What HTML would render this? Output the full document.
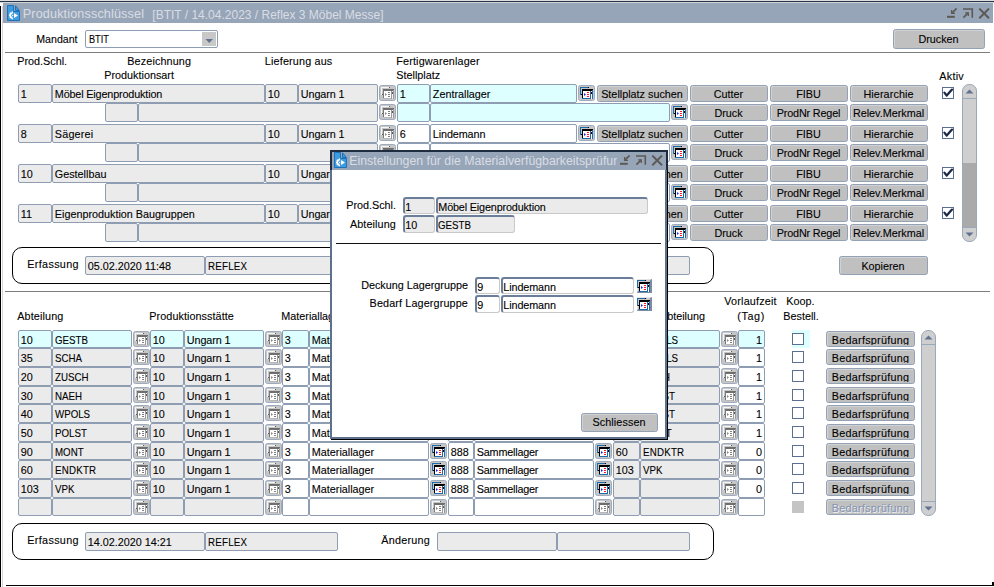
<!DOCTYPE html>
<html><head><meta charset="utf-8"><title>Produktionsschlüssel</title>
<style>
html,body{margin:0;padding:0;background:#ffffff;}
body{width:994px;height:587px;position:relative;overflow:hidden;font-family:"Liberation Sans",sans-serif;}
div{position:absolute;}
.t{white-space:nowrap;line-height:1;-webkit-text-stroke:0.1px currentColor;}
</style></head><body>
<div style="left:0;top:0;width:994px;height:1px;background:#dedede"></div>
<div style="left:0px;top:1px;width:994px;height:1px;background:#25344a"></div>
<div style="left:0px;top:2px;width:994px;height:1px;background:#d3d4d6"></div>
<div style="left:0px;top:6px;width:1px;height:581px;background:#000"></div>
<div style="left:2px;top:6px;width:1px;height:581px;background:#d6d6d6"></div>
<div style="left:3px;top:3px;width:990px;height:20px;background:#97a5b9"></div>
<svg style="position:absolute;left:7px;top:5px" width="14" height="17" viewBox="0 0 14 17"><path d="M0.5 0.5H6.5V6.5H12.5V15.5H0.5Z" fill="#3d9be0" stroke="#1e72b8" stroke-width="1"/><path d="M8.5 0.8L12.5 5.5H8.5Z" fill="#3d9be0" stroke="#1e72b8" stroke-width="1"/><path d="M5.5 8.1A2.3 2.3 0 0 0 5.5 12.7" stroke="#fff" stroke-width="1.7" fill="none"/><path d="M2 10.4H3.4M2.9 7.8L3.9 8.8M2.9 13L3.9 12M5.4 6.6V7.9M5.4 12.9V14.2" stroke="#fff" stroke-width="1.3"/><circle cx="5.6" cy="10.4" r="0.75" fill="#fff"/><path d="M7 8L11 10.5L7 13Z" fill="#fff"/></svg>
<div class="t" style="left:22.8px;top:8.33px;font-size:12.6px;color:#d9dde3;transform-origin:0 0;-webkit-text-stroke:0;letter-spacing:0.15px;">Produktionsschlüssel</div>
<div class="t" style="left:152.3px;top:8.84px;font-size:12px;color:#d9dde3;transform-origin:0 0;-webkit-text-stroke:0;">[BTIT / 14.04.2023 / Reflex 3 Möbel Messe]</div>
<svg style="position:absolute;left:947px;top:8px" width="46" height="12" viewBox="0 0 46 12"><path d="M0 8.8H7.8" stroke="#5d5954" stroke-width="2"/><path d="M9.6 0.4L4.9 5.1" stroke="#5d5954" stroke-width="1.7"/><path d="M4.6 2V5.4H7.9" fill="none" stroke="#5d5954" stroke-width="1.3"/><path d="M16 1H25.3V9.8" fill="none" stroke="#5d5954" stroke-width="1.6"/><path d="M16.4 9.6L21.2 4.8" stroke="#5d5954" stroke-width="1.7"/><path d="M18.2 4.8H21.3V7.9" fill="none" stroke="#5d5954" stroke-width="1.3"/><path d="M32.3 0.6L42 10.2M42 0.6L32.3 10.2" stroke="#5d5954" stroke-width="2"/></svg>
<div style="left:6px;top:585px;width:987px;height:1px;background:#000000"></div>
<div style="left:992px;top:582px;width:2px;height:4px;background:#000"></div>
<div class="t" style="left:36.3px;top:34.03px;font-size:10.6px;color:#000000;transform-origin:0 0;">Mandant</div>
<div style="left:85px;top:30px;width:133px;height:18px;background:#fff;border:1px solid #8f9db3;border-radius:2px;box-sizing:border-box"></div>
<div class="t" style="left:89.3px;top:34.87px;font-size:10.2px;color:#000000;transform:scaleX(0.9);transform-origin:0 0;">BTIT</div>
<div style="left:202px;top:32px;width:14px;height:14px;background:#c8c8c8"></div>
<svg style="position:absolute;left:202px;top:32px" width="14" height="14" viewBox="0 0 14 14"><path d="M3.5 7H11L7.25 11Z" fill="#5f7391"/></svg>
<div style="left:893px;top:29px;width:92px;height:20px;background:#c0c0c0;border:1px solid #93a1b6;border-radius:2.5px;box-sizing:border-box;box-shadow:inset 1px 1px 0 #d2d2d2"></div>
<div class="t" style="left:892.5px;width:92px;text-align:center;top:33.86px;font-size:10.8px;color:#000000;">Drucken</div>
<div style="left:5px;top:52px;width:985px;height:1px;background:#7d7d7d"></div>
<div class="t" style="left:17.3px;top:55.86px;font-size:10.8px;color:#000000;transform-origin:0 0;">Prod.Schl.</div>
<div class="t" style="left:127.3px;top:55.86px;font-size:10.8px;color:#000000;letter-spacing:0.12px;transform-origin:0 0;">Bezeichnung</div>
<div class="t" style="left:104.3px;top:69.86px;font-size:10.8px;color:#000000;transform-origin:0 0;">Produktionsart</div>
<div class="t" style="left:264.8px;top:55.86px;font-size:10.8px;color:#000000;letter-spacing:0.17px;transform-origin:0 0;">Lieferung aus</div>
<div class="t" style="left:396.3px;top:55.86px;font-size:10.8px;color:#000000;letter-spacing:0.15px;transform-origin:0 0;">Fertigwarenlager</div>
<div class="t" style="left:396.3px;top:69.86px;font-size:10.8px;color:#000000;transform-origin:0 0;">Stellplatz</div>
<div class="t" style="left:939.3px;top:70.86px;font-size:10.8px;color:#000000;letter-spacing:0.25px;transform-origin:0 0;">Aktiv</div>
<div style="left:18px;top:84px;width:34px;height:19px;background:#ebebeb;border:1px solid #8f9db3;border-radius:2px;box-sizing:border-box"></div>
<div class="t" style="left:20.8px;top:88.86px;font-size:10.8px;color:#000000;transform-origin:0 0;">1</div>
<div style="left:52px;top:84px;width:213px;height:19px;background:#ebebeb;border:1px solid #8f9db3;border-radius:2px;box-sizing:border-box"></div>
<div class="t" style="left:54.8px;top:88.86px;font-size:10.8px;color:#000000;letter-spacing:-0.15px;transform-origin:0 0;">Möbel Eigenproduktion</div>
<div style="left:265px;top:84px;width:33px;height:19px;background:#ebebeb;border:1px solid #8f9db3;border-radius:2px;box-sizing:border-box"></div>
<div class="t" style="left:267.8px;top:88.86px;font-size:10.8px;color:#000000;transform-origin:0 0;">10</div>
<div style="left:298px;top:84px;width:80px;height:19px;background:#ebebeb;border:1px solid #8f9db3;border-radius:2px;box-sizing:border-box"></div>
<div class="t" style="left:300.8px;top:88.86px;font-size:10.8px;color:#000000;letter-spacing:-0.1px;transform-origin:0 0;">Ungarn 1</div>
<div style="left:379px;top:85px;width:17px;height:16px;background:#c6c6c6;border:1px solid #9eabbf;border-radius:2.5px;box-sizing:border-box"></div>
<svg style="position:absolute;left:379px;top:85px" width="17" height="16" viewBox="0 0 17 16" shape-rendering="crispEdges">
<path d="M2.5 9.5V2.5H10" fill="none" stroke="#f6f6f6" stroke-width="1"/><rect x="10" y="2" width="1" height="1" fill="#5a5a5a"/><rect x="3" y="9" width="1" height="1" fill="#5a5a5a"/><rect x="5" y="5.5" width="7" height="7.5" fill="#ffffff"/><rect x="4" y="4" width="11" height="1.6" fill="#6e6e6e"/><rect x="4" y="5" width="1" height="9" fill="#7a7a7a"/><rect x="4" y="13" width="11" height="1" fill="#b8b8b8"/><rect x="12" y="5.5" width="1" height="8" fill="#9a9a9a"/><rect x="13" y="5.5" width="1" height="8" fill="#f2f2f2"/><rect x="14" y="5" width="1" height="8.5" fill="#9a9a9a"/><rect x="13" y="7" width="1" height="2" fill="#5a5a5a"/><path d="M6 7.9L8 9.4L6 10.9Z" fill="#8a8a8a" shape-rendering="auto"/><rect x="9" y="7" width="2" height="1" fill="#7e7e7e"/><rect x="9" y="9" width="2" height="1" fill="#7e7e7e"/><rect x="9" y="11" width="2" height="1" fill="#7e7e7e"/></svg>
<div style="left:397px;top:84px;width:33px;height:19px;background:#ddffff;border:1px solid #8f9db3;border-radius:2px;box-sizing:border-box"></div>
<div class="t" style="left:399.8px;top:88.86px;font-size:10.8px;color:#000000;transform-origin:0 0;">1</div>
<div style="left:430px;top:84px;width:147px;height:19px;background:#ddffff;border:1px solid #8f9db3;border-radius:2px;box-sizing:border-box"></div>
<div class="t" style="left:432.8px;top:88.86px;font-size:10.8px;color:#000000;transform-origin:0 0;">Zentrallager</div>
<div style="left:578px;top:85px;width:17px;height:16px;background:#c6c6c6;border:1px solid #9eabbf;border-radius:2.5px;box-sizing:border-box"></div>
<svg style="position:absolute;left:578px;top:85px" width="17" height="16" viewBox="0 0 17 16" shape-rendering="crispEdges">
<path d="M2.5 9.5V2.5H10" fill="none" stroke="#1f6aa8" stroke-width="1"/><rect x="10" y="2" width="1" height="1" fill="#000"/><rect x="3" y="9" width="1" height="1" fill="#000"/><rect x="5" y="5.5" width="7" height="7.5" fill="#ffffff"/><rect x="4" y="4" width="11" height="1.6" fill="#000000"/><rect x="4" y="5" width="1" height="9" fill="#000"/><rect x="4" y="13" width="11" height="1" fill="#1f6aa8"/><rect x="12" y="5.5" width="1" height="8" fill="#1f6aa8"/><rect x="13" y="5.5" width="1" height="8" fill="#ffffff"/><rect x="14" y="5" width="1" height="8.5" fill="#1f6aa8"/><rect x="13" y="7" width="1" height="2" fill="#000"/><path d="M6 7.9L8 9.4L6 10.9Z" fill="#1a2cff" shape-rendering="auto"/><rect x="9" y="7" width="2" height="1" fill="#ff1a1a"/><rect x="9" y="9" width="2" height="1" fill="#ff1a1a"/><rect x="9" y="11" width="2" height="1" fill="#ff1a1a"/></svg>
<div style="left:597px;top:85px;width:91px;height:17px;background:#c0c0c0;border:1px solid #93a1b6;border-radius:2.5px;box-sizing:border-box;box-shadow:inset 1px 1px 0 #d2d2d2"></div>
<div class="t" style="left:596.5px;width:91px;text-align:center;top:88.86px;font-size:10.8px;color:#000000;">Stellplatz suchen</div>
<div style="left:690px;top:85px;width:78px;height:17px;background:#c0c0c0;border:1px solid #93a1b6;border-radius:2.5px;box-sizing:border-box;box-shadow:inset 1px 1px 0 #d2d2d2"></div>
<div class="t" style="left:689.5px;width:78px;text-align:center;top:88.86px;font-size:10.8px;color:#000000;">Cutter</div>
<div style="left:770px;top:85px;width:78px;height:17px;background:#c0c0c0;border:1px solid #93a1b6;border-radius:2.5px;box-sizing:border-box;box-shadow:inset 1px 1px 0 #d2d2d2"></div>
<div class="t" style="left:769.5px;width:78px;text-align:center;top:88.86px;font-size:10.8px;color:#000000;">FIBU</div>
<div style="left:850px;top:85px;width:78px;height:17px;background:#c0c0c0;border:1px solid #93a1b6;border-radius:2.5px;box-sizing:border-box;box-shadow:inset 1px 1px 0 #d2d2d2"></div>
<div class="t" style="left:849.5px;width:78px;text-align:center;top:88.86px;font-size:10.8px;color:#000000;letter-spacing:0.1px;">Hierarchie</div>
<div style="left:942px;top:87px;width:12px;height:12px;background:#ffffff;border:1px solid #5b6f8e;box-sizing:border-box"></div>
<svg style="position:absolute;left:942px;top:87px" width="12" height="12" viewBox="0 0 12 12"><path d="M2.4 5.6L4.7 8.6L10 2.6" fill="none" stroke="#1c2a48" stroke-width="2.3" stroke-linecap="round" stroke-linejoin="round"/></svg>
<div style="left:105px;top:103px;width:33px;height:19px;background:#ebebeb;border:1px solid #8f9db3;border-radius:2px;box-sizing:border-box"></div>
<div style="left:138px;top:103px;width:240px;height:19px;background:#ebebeb;border:1px solid #8f9db3;border-radius:2px;box-sizing:border-box"></div>
<div style="left:379px;top:104px;width:17px;height:16px;background:#c6c6c6;border:1px solid #9eabbf;border-radius:2.5px;box-sizing:border-box"></div>
<svg style="position:absolute;left:379px;top:104px" width="17" height="16" viewBox="0 0 17 16" shape-rendering="crispEdges">
<path d="M2.5 9.5V2.5H10" fill="none" stroke="#f6f6f6" stroke-width="1"/><rect x="10" y="2" width="1" height="1" fill="#5a5a5a"/><rect x="3" y="9" width="1" height="1" fill="#5a5a5a"/><rect x="5" y="5.5" width="7" height="7.5" fill="#ffffff"/><rect x="4" y="4" width="11" height="1.6" fill="#6e6e6e"/><rect x="4" y="5" width="1" height="9" fill="#7a7a7a"/><rect x="4" y="13" width="11" height="1" fill="#b8b8b8"/><rect x="12" y="5.5" width="1" height="8" fill="#9a9a9a"/><rect x="13" y="5.5" width="1" height="8" fill="#f2f2f2"/><rect x="14" y="5" width="1" height="8.5" fill="#9a9a9a"/><rect x="13" y="7" width="1" height="2" fill="#5a5a5a"/><path d="M6 7.9L8 9.4L6 10.9Z" fill="#8a8a8a" shape-rendering="auto"/><rect x="9" y="7" width="2" height="1" fill="#7e7e7e"/><rect x="9" y="9" width="2" height="1" fill="#7e7e7e"/><rect x="9" y="11" width="2" height="1" fill="#7e7e7e"/></svg>
<div style="left:397px;top:103px;width:33px;height:19px;background:#ddffff;border:1px solid #8f9db3;border-radius:2px;box-sizing:border-box"></div>
<div style="left:430px;top:103px;width:240px;height:19px;background:#ddffff;border:1px solid #8f9db3;border-radius:2px;box-sizing:border-box"></div>
<div style="left:671px;top:104px;width:17px;height:16px;background:#c6c6c6;border:1px solid #9eabbf;border-radius:2.5px;box-sizing:border-box"></div>
<svg style="position:absolute;left:671px;top:104px" width="17" height="16" viewBox="0 0 17 16" shape-rendering="crispEdges">
<path d="M2.5 9.5V2.5H10" fill="none" stroke="#1f6aa8" stroke-width="1"/><rect x="10" y="2" width="1" height="1" fill="#000"/><rect x="3" y="9" width="1" height="1" fill="#000"/><rect x="5" y="5.5" width="7" height="7.5" fill="#ffffff"/><rect x="4" y="4" width="11" height="1.6" fill="#000000"/><rect x="4" y="5" width="1" height="9" fill="#000"/><rect x="4" y="13" width="11" height="1" fill="#1f6aa8"/><rect x="12" y="5.5" width="1" height="8" fill="#1f6aa8"/><rect x="13" y="5.5" width="1" height="8" fill="#ffffff"/><rect x="14" y="5" width="1" height="8.5" fill="#1f6aa8"/><rect x="13" y="7" width="1" height="2" fill="#000"/><path d="M6 7.9L8 9.4L6 10.9Z" fill="#1a2cff" shape-rendering="auto"/><rect x="9" y="7" width="2" height="1" fill="#ff1a1a"/><rect x="9" y="9" width="2" height="1" fill="#ff1a1a"/><rect x="9" y="11" width="2" height="1" fill="#ff1a1a"/></svg>
<div style="left:690px;top:104px;width:78px;height:17px;background:#c0c0c0;border:1px solid #93a1b6;border-radius:2.5px;box-sizing:border-box;box-shadow:inset 1px 1px 0 #d2d2d2"></div>
<div class="t" style="left:689.5px;width:78px;text-align:center;top:107.86px;font-size:10.8px;color:#000000;">Druck</div>
<div style="left:770px;top:104px;width:78px;height:17px;background:#c0c0c0;border:1px solid #93a1b6;border-radius:2.5px;box-sizing:border-box;box-shadow:inset 1px 1px 0 #d2d2d2"></div>
<div class="t" style="left:769.5px;width:78px;text-align:center;top:107.86px;font-size:10.8px;color:#000000;letter-spacing:-0.15px;">ProdNr Regel</div>
<div style="left:850px;top:104px;width:78px;height:17px;background:#c0c0c0;border:1px solid #93a1b6;border-radius:2.5px;box-sizing:border-box;box-shadow:inset 1px 1px 0 #d2d2d2"></div>
<div class="t" style="left:849.5px;width:78px;text-align:center;top:107.86px;font-size:10.8px;color:#000000;">Relev.Merkmal</div>
<div style="left:18px;top:124px;width:34px;height:19px;background:#ebebeb;border:1px solid #8f9db3;border-radius:2px;box-sizing:border-box"></div>
<div class="t" style="left:20.8px;top:128.86px;font-size:10.8px;color:#000000;transform-origin:0 0;">8</div>
<div style="left:52px;top:124px;width:213px;height:19px;background:#ebebeb;border:1px solid #8f9db3;border-radius:2px;box-sizing:border-box"></div>
<div class="t" style="left:54.8px;top:128.86px;font-size:10.8px;color:#000000;letter-spacing:0.2px;transform-origin:0 0;">Sägerei</div>
<div style="left:265px;top:124px;width:33px;height:19px;background:#ebebeb;border:1px solid #8f9db3;border-radius:2px;box-sizing:border-box"></div>
<div class="t" style="left:267.8px;top:128.86px;font-size:10.8px;color:#000000;transform-origin:0 0;">10</div>
<div style="left:298px;top:124px;width:80px;height:19px;background:#ebebeb;border:1px solid #8f9db3;border-radius:2px;box-sizing:border-box"></div>
<div class="t" style="left:300.8px;top:128.86px;font-size:10.8px;color:#000000;letter-spacing:-0.1px;transform-origin:0 0;">Ungarn 1</div>
<div style="left:379px;top:125px;width:17px;height:16px;background:#c6c6c6;border:1px solid #9eabbf;border-radius:2.5px;box-sizing:border-box"></div>
<svg style="position:absolute;left:379px;top:125px" width="17" height="16" viewBox="0 0 17 16" shape-rendering="crispEdges">
<path d="M2.5 9.5V2.5H10" fill="none" stroke="#f6f6f6" stroke-width="1"/><rect x="10" y="2" width="1" height="1" fill="#5a5a5a"/><rect x="3" y="9" width="1" height="1" fill="#5a5a5a"/><rect x="5" y="5.5" width="7" height="7.5" fill="#ffffff"/><rect x="4" y="4" width="11" height="1.6" fill="#6e6e6e"/><rect x="4" y="5" width="1" height="9" fill="#7a7a7a"/><rect x="4" y="13" width="11" height="1" fill="#b8b8b8"/><rect x="12" y="5.5" width="1" height="8" fill="#9a9a9a"/><rect x="13" y="5.5" width="1" height="8" fill="#f2f2f2"/><rect x="14" y="5" width="1" height="8.5" fill="#9a9a9a"/><rect x="13" y="7" width="1" height="2" fill="#5a5a5a"/><path d="M6 7.9L8 9.4L6 10.9Z" fill="#8a8a8a" shape-rendering="auto"/><rect x="9" y="7" width="2" height="1" fill="#7e7e7e"/><rect x="9" y="9" width="2" height="1" fill="#7e7e7e"/><rect x="9" y="11" width="2" height="1" fill="#7e7e7e"/></svg>
<div style="left:397px;top:124px;width:33px;height:19px;background:#ffffff;border:1px solid #8f9db3;border-radius:2px;box-sizing:border-box"></div>
<div class="t" style="left:399.8px;top:128.86px;font-size:10.8px;color:#000000;transform-origin:0 0;">6</div>
<div style="left:430px;top:124px;width:147px;height:19px;background:#ffffff;border:1px solid #8f9db3;border-radius:2px;box-sizing:border-box"></div>
<div class="t" style="left:432.8px;top:128.86px;font-size:10.8px;color:#000000;letter-spacing:-0.1px;transform-origin:0 0;">Lindemann</div>
<div style="left:578px;top:125px;width:17px;height:16px;background:#c6c6c6;border:1px solid #9eabbf;border-radius:2.5px;box-sizing:border-box"></div>
<svg style="position:absolute;left:578px;top:125px" width="17" height="16" viewBox="0 0 17 16" shape-rendering="crispEdges">
<path d="M2.5 9.5V2.5H10" fill="none" stroke="#1f6aa8" stroke-width="1"/><rect x="10" y="2" width="1" height="1" fill="#000"/><rect x="3" y="9" width="1" height="1" fill="#000"/><rect x="5" y="5.5" width="7" height="7.5" fill="#ffffff"/><rect x="4" y="4" width="11" height="1.6" fill="#000000"/><rect x="4" y="5" width="1" height="9" fill="#000"/><rect x="4" y="13" width="11" height="1" fill="#1f6aa8"/><rect x="12" y="5.5" width="1" height="8" fill="#1f6aa8"/><rect x="13" y="5.5" width="1" height="8" fill="#ffffff"/><rect x="14" y="5" width="1" height="8.5" fill="#1f6aa8"/><rect x="13" y="7" width="1" height="2" fill="#000"/><path d="M6 7.9L8 9.4L6 10.9Z" fill="#1a2cff" shape-rendering="auto"/><rect x="9" y="7" width="2" height="1" fill="#ff1a1a"/><rect x="9" y="9" width="2" height="1" fill="#ff1a1a"/><rect x="9" y="11" width="2" height="1" fill="#ff1a1a"/></svg>
<div style="left:597px;top:125px;width:91px;height:17px;background:#c0c0c0;border:1px solid #93a1b6;border-radius:2.5px;box-sizing:border-box;box-shadow:inset 1px 1px 0 #d2d2d2"></div>
<div class="t" style="left:596.5px;width:91px;text-align:center;top:128.86px;font-size:10.8px;color:#000000;">Stellplatz suchen</div>
<div style="left:690px;top:125px;width:78px;height:17px;background:#c0c0c0;border:1px solid #93a1b6;border-radius:2.5px;box-sizing:border-box;box-shadow:inset 1px 1px 0 #d2d2d2"></div>
<div class="t" style="left:689.5px;width:78px;text-align:center;top:128.86px;font-size:10.8px;color:#000000;">Cutter</div>
<div style="left:770px;top:125px;width:78px;height:17px;background:#c0c0c0;border:1px solid #93a1b6;border-radius:2.5px;box-sizing:border-box;box-shadow:inset 1px 1px 0 #d2d2d2"></div>
<div class="t" style="left:769.5px;width:78px;text-align:center;top:128.86px;font-size:10.8px;color:#000000;">FIBU</div>
<div style="left:850px;top:125px;width:78px;height:17px;background:#c0c0c0;border:1px solid #93a1b6;border-radius:2.5px;box-sizing:border-box;box-shadow:inset 1px 1px 0 #d2d2d2"></div>
<div class="t" style="left:849.5px;width:78px;text-align:center;top:128.86px;font-size:10.8px;color:#000000;letter-spacing:0.1px;">Hierarchie</div>
<div style="left:942px;top:127px;width:12px;height:12px;background:#ffffff;border:1px solid #5b6f8e;box-sizing:border-box"></div>
<svg style="position:absolute;left:942px;top:127px" width="12" height="12" viewBox="0 0 12 12"><path d="M2.4 5.6L4.7 8.6L10 2.6" fill="none" stroke="#1c2a48" stroke-width="2.3" stroke-linecap="round" stroke-linejoin="round"/></svg>
<div style="left:105px;top:143px;width:33px;height:19px;background:#ebebeb;border:1px solid #8f9db3;border-radius:2px;box-sizing:border-box"></div>
<div style="left:138px;top:143px;width:240px;height:19px;background:#ebebeb;border:1px solid #8f9db3;border-radius:2px;box-sizing:border-box"></div>
<div style="left:379px;top:144px;width:17px;height:16px;background:#c6c6c6;border:1px solid #9eabbf;border-radius:2.5px;box-sizing:border-box"></div>
<svg style="position:absolute;left:379px;top:144px" width="17" height="16" viewBox="0 0 17 16" shape-rendering="crispEdges">
<path d="M2.5 9.5V2.5H10" fill="none" stroke="#f6f6f6" stroke-width="1"/><rect x="10" y="2" width="1" height="1" fill="#5a5a5a"/><rect x="3" y="9" width="1" height="1" fill="#5a5a5a"/><rect x="5" y="5.5" width="7" height="7.5" fill="#ffffff"/><rect x="4" y="4" width="11" height="1.6" fill="#6e6e6e"/><rect x="4" y="5" width="1" height="9" fill="#7a7a7a"/><rect x="4" y="13" width="11" height="1" fill="#b8b8b8"/><rect x="12" y="5.5" width="1" height="8" fill="#9a9a9a"/><rect x="13" y="5.5" width="1" height="8" fill="#f2f2f2"/><rect x="14" y="5" width="1" height="8.5" fill="#9a9a9a"/><rect x="13" y="7" width="1" height="2" fill="#5a5a5a"/><path d="M6 7.9L8 9.4L6 10.9Z" fill="#8a8a8a" shape-rendering="auto"/><rect x="9" y="7" width="2" height="1" fill="#7e7e7e"/><rect x="9" y="9" width="2" height="1" fill="#7e7e7e"/><rect x="9" y="11" width="2" height="1" fill="#7e7e7e"/></svg>
<div style="left:397px;top:143px;width:33px;height:19px;background:#ffffff;border:1px solid #8f9db3;border-radius:2px;box-sizing:border-box"></div>
<div style="left:430px;top:143px;width:240px;height:19px;background:#ffffff;border:1px solid #8f9db3;border-radius:2px;box-sizing:border-box"></div>
<div style="left:671px;top:144px;width:17px;height:16px;background:#c6c6c6;border:1px solid #9eabbf;border-radius:2.5px;box-sizing:border-box"></div>
<svg style="position:absolute;left:671px;top:144px" width="17" height="16" viewBox="0 0 17 16" shape-rendering="crispEdges">
<path d="M2.5 9.5V2.5H10" fill="none" stroke="#1f6aa8" stroke-width="1"/><rect x="10" y="2" width="1" height="1" fill="#000"/><rect x="3" y="9" width="1" height="1" fill="#000"/><rect x="5" y="5.5" width="7" height="7.5" fill="#ffffff"/><rect x="4" y="4" width="11" height="1.6" fill="#000000"/><rect x="4" y="5" width="1" height="9" fill="#000"/><rect x="4" y="13" width="11" height="1" fill="#1f6aa8"/><rect x="12" y="5.5" width="1" height="8" fill="#1f6aa8"/><rect x="13" y="5.5" width="1" height="8" fill="#ffffff"/><rect x="14" y="5" width="1" height="8.5" fill="#1f6aa8"/><rect x="13" y="7" width="1" height="2" fill="#000"/><path d="M6 7.9L8 9.4L6 10.9Z" fill="#1a2cff" shape-rendering="auto"/><rect x="9" y="7" width="2" height="1" fill="#ff1a1a"/><rect x="9" y="9" width="2" height="1" fill="#ff1a1a"/><rect x="9" y="11" width="2" height="1" fill="#ff1a1a"/></svg>
<div style="left:690px;top:144px;width:78px;height:17px;background:#c0c0c0;border:1px solid #93a1b6;border-radius:2.5px;box-sizing:border-box;box-shadow:inset 1px 1px 0 #d2d2d2"></div>
<div class="t" style="left:689.5px;width:78px;text-align:center;top:147.86px;font-size:10.8px;color:#000000;">Druck</div>
<div style="left:770px;top:144px;width:78px;height:17px;background:#c0c0c0;border:1px solid #93a1b6;border-radius:2.5px;box-sizing:border-box;box-shadow:inset 1px 1px 0 #d2d2d2"></div>
<div class="t" style="left:769.5px;width:78px;text-align:center;top:147.86px;font-size:10.8px;color:#000000;letter-spacing:-0.15px;">ProdNr Regel</div>
<div style="left:850px;top:144px;width:78px;height:17px;background:#c0c0c0;border:1px solid #93a1b6;border-radius:2.5px;box-sizing:border-box;box-shadow:inset 1px 1px 0 #d2d2d2"></div>
<div class="t" style="left:849.5px;width:78px;text-align:center;top:147.86px;font-size:10.8px;color:#000000;">Relev.Merkmal</div>
<div style="left:18px;top:164px;width:34px;height:19px;background:#ebebeb;border:1px solid #8f9db3;border-radius:2px;box-sizing:border-box"></div>
<div class="t" style="left:20.8px;top:168.86px;font-size:10.8px;color:#000000;transform-origin:0 0;">10</div>
<div style="left:52px;top:164px;width:213px;height:19px;background:#ebebeb;border:1px solid #8f9db3;border-radius:2px;box-sizing:border-box"></div>
<div class="t" style="left:54.8px;top:168.86px;font-size:10.8px;color:#000000;transform-origin:0 0;">Gestellbau</div>
<div style="left:265px;top:164px;width:33px;height:19px;background:#ebebeb;border:1px solid #8f9db3;border-radius:2px;box-sizing:border-box"></div>
<div class="t" style="left:267.8px;top:168.86px;font-size:10.8px;color:#000000;transform-origin:0 0;">10</div>
<div style="left:298px;top:164px;width:80px;height:19px;background:#ebebeb;border:1px solid #8f9db3;border-radius:2px;box-sizing:border-box"></div>
<div class="t" style="left:300.8px;top:168.86px;font-size:10.8px;color:#000000;letter-spacing:-0.1px;transform-origin:0 0;">Ungarn 1</div>
<div style="left:379px;top:165px;width:17px;height:16px;background:#c6c6c6;border:1px solid #9eabbf;border-radius:2.5px;box-sizing:border-box"></div>
<svg style="position:absolute;left:379px;top:165px" width="17" height="16" viewBox="0 0 17 16" shape-rendering="crispEdges">
<path d="M2.5 9.5V2.5H10" fill="none" stroke="#f6f6f6" stroke-width="1"/><rect x="10" y="2" width="1" height="1" fill="#5a5a5a"/><rect x="3" y="9" width="1" height="1" fill="#5a5a5a"/><rect x="5" y="5.5" width="7" height="7.5" fill="#ffffff"/><rect x="4" y="4" width="11" height="1.6" fill="#6e6e6e"/><rect x="4" y="5" width="1" height="9" fill="#7a7a7a"/><rect x="4" y="13" width="11" height="1" fill="#b8b8b8"/><rect x="12" y="5.5" width="1" height="8" fill="#9a9a9a"/><rect x="13" y="5.5" width="1" height="8" fill="#f2f2f2"/><rect x="14" y="5" width="1" height="8.5" fill="#9a9a9a"/><rect x="13" y="7" width="1" height="2" fill="#5a5a5a"/><path d="M6 7.9L8 9.4L6 10.9Z" fill="#8a8a8a" shape-rendering="auto"/><rect x="9" y="7" width="2" height="1" fill="#7e7e7e"/><rect x="9" y="9" width="2" height="1" fill="#7e7e7e"/><rect x="9" y="11" width="2" height="1" fill="#7e7e7e"/></svg>
<div style="left:397px;top:164px;width:33px;height:19px;background:#ffffff;border:1px solid #8f9db3;border-radius:2px;box-sizing:border-box"></div>
<div style="left:430px;top:164px;width:147px;height:19px;background:#ffffff;border:1px solid #8f9db3;border-radius:2px;box-sizing:border-box"></div>
<div style="left:578px;top:165px;width:17px;height:16px;background:#c6c6c6;border:1px solid #9eabbf;border-radius:2.5px;box-sizing:border-box"></div>
<svg style="position:absolute;left:578px;top:165px" width="17" height="16" viewBox="0 0 17 16" shape-rendering="crispEdges">
<path d="M2.5 9.5V2.5H10" fill="none" stroke="#1f6aa8" stroke-width="1"/><rect x="10" y="2" width="1" height="1" fill="#000"/><rect x="3" y="9" width="1" height="1" fill="#000"/><rect x="5" y="5.5" width="7" height="7.5" fill="#ffffff"/><rect x="4" y="4" width="11" height="1.6" fill="#000000"/><rect x="4" y="5" width="1" height="9" fill="#000"/><rect x="4" y="13" width="11" height="1" fill="#1f6aa8"/><rect x="12" y="5.5" width="1" height="8" fill="#1f6aa8"/><rect x="13" y="5.5" width="1" height="8" fill="#ffffff"/><rect x="14" y="5" width="1" height="8.5" fill="#1f6aa8"/><rect x="13" y="7" width="1" height="2" fill="#000"/><path d="M6 7.9L8 9.4L6 10.9Z" fill="#1a2cff" shape-rendering="auto"/><rect x="9" y="7" width="2" height="1" fill="#ff1a1a"/><rect x="9" y="9" width="2" height="1" fill="#ff1a1a"/><rect x="9" y="11" width="2" height="1" fill="#ff1a1a"/></svg>
<div style="left:597px;top:165px;width:91px;height:17px;background:#c0c0c0;border:1px solid #93a1b6;border-radius:2.5px;box-sizing:border-box;box-shadow:inset 1px 1px 0 #d2d2d2"></div>
<div class="t" style="left:596.5px;width:91px;text-align:center;top:168.86px;font-size:10.8px;color:#000000;">Stellplatz suchen</div>
<div style="left:690px;top:165px;width:78px;height:17px;background:#c0c0c0;border:1px solid #93a1b6;border-radius:2.5px;box-sizing:border-box;box-shadow:inset 1px 1px 0 #d2d2d2"></div>
<div class="t" style="left:689.5px;width:78px;text-align:center;top:168.86px;font-size:10.8px;color:#000000;">Cutter</div>
<div style="left:770px;top:165px;width:78px;height:17px;background:#c0c0c0;border:1px solid #93a1b6;border-radius:2.5px;box-sizing:border-box;box-shadow:inset 1px 1px 0 #d2d2d2"></div>
<div class="t" style="left:769.5px;width:78px;text-align:center;top:168.86px;font-size:10.8px;color:#000000;">FIBU</div>
<div style="left:850px;top:165px;width:78px;height:17px;background:#c0c0c0;border:1px solid #93a1b6;border-radius:2.5px;box-sizing:border-box;box-shadow:inset 1px 1px 0 #d2d2d2"></div>
<div class="t" style="left:849.5px;width:78px;text-align:center;top:168.86px;font-size:10.8px;color:#000000;letter-spacing:0.1px;">Hierarchie</div>
<div style="left:942px;top:167px;width:12px;height:12px;background:#ffffff;border:1px solid #5b6f8e;box-sizing:border-box"></div>
<svg style="position:absolute;left:942px;top:167px" width="12" height="12" viewBox="0 0 12 12"><path d="M2.4 5.6L4.7 8.6L10 2.6" fill="none" stroke="#1c2a48" stroke-width="2.3" stroke-linecap="round" stroke-linejoin="round"/></svg>
<div style="left:105px;top:183px;width:33px;height:19px;background:#ebebeb;border:1px solid #8f9db3;border-radius:2px;box-sizing:border-box"></div>
<div style="left:138px;top:183px;width:240px;height:19px;background:#ebebeb;border:1px solid #8f9db3;border-radius:2px;box-sizing:border-box"></div>
<div style="left:379px;top:184px;width:17px;height:16px;background:#c6c6c6;border:1px solid #9eabbf;border-radius:2.5px;box-sizing:border-box"></div>
<svg style="position:absolute;left:379px;top:184px" width="17" height="16" viewBox="0 0 17 16" shape-rendering="crispEdges">
<path d="M2.5 9.5V2.5H10" fill="none" stroke="#f6f6f6" stroke-width="1"/><rect x="10" y="2" width="1" height="1" fill="#5a5a5a"/><rect x="3" y="9" width="1" height="1" fill="#5a5a5a"/><rect x="5" y="5.5" width="7" height="7.5" fill="#ffffff"/><rect x="4" y="4" width="11" height="1.6" fill="#6e6e6e"/><rect x="4" y="5" width="1" height="9" fill="#7a7a7a"/><rect x="4" y="13" width="11" height="1" fill="#b8b8b8"/><rect x="12" y="5.5" width="1" height="8" fill="#9a9a9a"/><rect x="13" y="5.5" width="1" height="8" fill="#f2f2f2"/><rect x="14" y="5" width="1" height="8.5" fill="#9a9a9a"/><rect x="13" y="7" width="1" height="2" fill="#5a5a5a"/><path d="M6 7.9L8 9.4L6 10.9Z" fill="#8a8a8a" shape-rendering="auto"/><rect x="9" y="7" width="2" height="1" fill="#7e7e7e"/><rect x="9" y="9" width="2" height="1" fill="#7e7e7e"/><rect x="9" y="11" width="2" height="1" fill="#7e7e7e"/></svg>
<div style="left:397px;top:183px;width:33px;height:19px;background:#ffffff;border:1px solid #8f9db3;border-radius:2px;box-sizing:border-box"></div>
<div style="left:430px;top:183px;width:240px;height:19px;background:#ffffff;border:1px solid #8f9db3;border-radius:2px;box-sizing:border-box"></div>
<div style="left:671px;top:184px;width:17px;height:16px;background:#c6c6c6;border:1px solid #9eabbf;border-radius:2.5px;box-sizing:border-box"></div>
<svg style="position:absolute;left:671px;top:184px" width="17" height="16" viewBox="0 0 17 16" shape-rendering="crispEdges">
<path d="M2.5 9.5V2.5H10" fill="none" stroke="#1f6aa8" stroke-width="1"/><rect x="10" y="2" width="1" height="1" fill="#000"/><rect x="3" y="9" width="1" height="1" fill="#000"/><rect x="5" y="5.5" width="7" height="7.5" fill="#ffffff"/><rect x="4" y="4" width="11" height="1.6" fill="#000000"/><rect x="4" y="5" width="1" height="9" fill="#000"/><rect x="4" y="13" width="11" height="1" fill="#1f6aa8"/><rect x="12" y="5.5" width="1" height="8" fill="#1f6aa8"/><rect x="13" y="5.5" width="1" height="8" fill="#ffffff"/><rect x="14" y="5" width="1" height="8.5" fill="#1f6aa8"/><rect x="13" y="7" width="1" height="2" fill="#000"/><path d="M6 7.9L8 9.4L6 10.9Z" fill="#1a2cff" shape-rendering="auto"/><rect x="9" y="7" width="2" height="1" fill="#ff1a1a"/><rect x="9" y="9" width="2" height="1" fill="#ff1a1a"/><rect x="9" y="11" width="2" height="1" fill="#ff1a1a"/></svg>
<div style="left:690px;top:184px;width:78px;height:17px;background:#c0c0c0;border:1px solid #93a1b6;border-radius:2.5px;box-sizing:border-box;box-shadow:inset 1px 1px 0 #d2d2d2"></div>
<div class="t" style="left:689.5px;width:78px;text-align:center;top:187.86px;font-size:10.8px;color:#000000;">Druck</div>
<div style="left:770px;top:184px;width:78px;height:17px;background:#c0c0c0;border:1px solid #93a1b6;border-radius:2.5px;box-sizing:border-box;box-shadow:inset 1px 1px 0 #d2d2d2"></div>
<div class="t" style="left:769.5px;width:78px;text-align:center;top:187.86px;font-size:10.8px;color:#000000;letter-spacing:-0.15px;">ProdNr Regel</div>
<div style="left:850px;top:184px;width:78px;height:17px;background:#c0c0c0;border:1px solid #93a1b6;border-radius:2.5px;box-sizing:border-box;box-shadow:inset 1px 1px 0 #d2d2d2"></div>
<div class="t" style="left:849.5px;width:78px;text-align:center;top:187.86px;font-size:10.8px;color:#000000;">Relev.Merkmal</div>
<div style="left:18px;top:204px;width:34px;height:19px;background:#ebebeb;border:1px solid #8f9db3;border-radius:2px;box-sizing:border-box"></div>
<div class="t" style="left:20.8px;top:208.86px;font-size:10.8px;color:#000000;transform-origin:0 0;">11</div>
<div style="left:52px;top:204px;width:213px;height:19px;background:#ebebeb;border:1px solid #8f9db3;border-radius:2px;box-sizing:border-box"></div>
<div class="t" style="left:54.8px;top:208.86px;font-size:10.8px;color:#000000;transform-origin:0 0;">Eigenproduktion Baugruppen</div>
<div style="left:265px;top:204px;width:33px;height:19px;background:#ebebeb;border:1px solid #8f9db3;border-radius:2px;box-sizing:border-box"></div>
<div class="t" style="left:267.8px;top:208.86px;font-size:10.8px;color:#000000;transform-origin:0 0;">10</div>
<div style="left:298px;top:204px;width:80px;height:19px;background:#ebebeb;border:1px solid #8f9db3;border-radius:2px;box-sizing:border-box"></div>
<div class="t" style="left:300.8px;top:208.86px;font-size:10.8px;color:#000000;letter-spacing:-0.1px;transform-origin:0 0;">Ungarn 1</div>
<div style="left:379px;top:205px;width:17px;height:16px;background:#c6c6c6;border:1px solid #9eabbf;border-radius:2.5px;box-sizing:border-box"></div>
<svg style="position:absolute;left:379px;top:205px" width="17" height="16" viewBox="0 0 17 16" shape-rendering="crispEdges">
<path d="M2.5 9.5V2.5H10" fill="none" stroke="#f6f6f6" stroke-width="1"/><rect x="10" y="2" width="1" height="1" fill="#5a5a5a"/><rect x="3" y="9" width="1" height="1" fill="#5a5a5a"/><rect x="5" y="5.5" width="7" height="7.5" fill="#ffffff"/><rect x="4" y="4" width="11" height="1.6" fill="#6e6e6e"/><rect x="4" y="5" width="1" height="9" fill="#7a7a7a"/><rect x="4" y="13" width="11" height="1" fill="#b8b8b8"/><rect x="12" y="5.5" width="1" height="8" fill="#9a9a9a"/><rect x="13" y="5.5" width="1" height="8" fill="#f2f2f2"/><rect x="14" y="5" width="1" height="8.5" fill="#9a9a9a"/><rect x="13" y="7" width="1" height="2" fill="#5a5a5a"/><path d="M6 7.9L8 9.4L6 10.9Z" fill="#8a8a8a" shape-rendering="auto"/><rect x="9" y="7" width="2" height="1" fill="#7e7e7e"/><rect x="9" y="9" width="2" height="1" fill="#7e7e7e"/><rect x="9" y="11" width="2" height="1" fill="#7e7e7e"/></svg>
<div style="left:397px;top:204px;width:33px;height:19px;background:#ffffff;border:1px solid #8f9db3;border-radius:2px;box-sizing:border-box"></div>
<div style="left:430px;top:204px;width:147px;height:19px;background:#ffffff;border:1px solid #8f9db3;border-radius:2px;box-sizing:border-box"></div>
<div style="left:578px;top:205px;width:17px;height:16px;background:#c6c6c6;border:1px solid #9eabbf;border-radius:2.5px;box-sizing:border-box"></div>
<svg style="position:absolute;left:578px;top:205px" width="17" height="16" viewBox="0 0 17 16" shape-rendering="crispEdges">
<path d="M2.5 9.5V2.5H10" fill="none" stroke="#1f6aa8" stroke-width="1"/><rect x="10" y="2" width="1" height="1" fill="#000"/><rect x="3" y="9" width="1" height="1" fill="#000"/><rect x="5" y="5.5" width="7" height="7.5" fill="#ffffff"/><rect x="4" y="4" width="11" height="1.6" fill="#000000"/><rect x="4" y="5" width="1" height="9" fill="#000"/><rect x="4" y="13" width="11" height="1" fill="#1f6aa8"/><rect x="12" y="5.5" width="1" height="8" fill="#1f6aa8"/><rect x="13" y="5.5" width="1" height="8" fill="#ffffff"/><rect x="14" y="5" width="1" height="8.5" fill="#1f6aa8"/><rect x="13" y="7" width="1" height="2" fill="#000"/><path d="M6 7.9L8 9.4L6 10.9Z" fill="#1a2cff" shape-rendering="auto"/><rect x="9" y="7" width="2" height="1" fill="#ff1a1a"/><rect x="9" y="9" width="2" height="1" fill="#ff1a1a"/><rect x="9" y="11" width="2" height="1" fill="#ff1a1a"/></svg>
<div style="left:597px;top:205px;width:91px;height:17px;background:#c0c0c0;border:1px solid #93a1b6;border-radius:2.5px;box-sizing:border-box;box-shadow:inset 1px 1px 0 #d2d2d2"></div>
<div class="t" style="left:596.5px;width:91px;text-align:center;top:208.86px;font-size:10.8px;color:#000000;">Stellplatz suchen</div>
<div style="left:690px;top:205px;width:78px;height:17px;background:#c0c0c0;border:1px solid #93a1b6;border-radius:2.5px;box-sizing:border-box;box-shadow:inset 1px 1px 0 #d2d2d2"></div>
<div class="t" style="left:689.5px;width:78px;text-align:center;top:208.86px;font-size:10.8px;color:#000000;">Cutter</div>
<div style="left:770px;top:205px;width:78px;height:17px;background:#c0c0c0;border:1px solid #93a1b6;border-radius:2.5px;box-sizing:border-box;box-shadow:inset 1px 1px 0 #d2d2d2"></div>
<div class="t" style="left:769.5px;width:78px;text-align:center;top:208.86px;font-size:10.8px;color:#000000;">FIBU</div>
<div style="left:850px;top:205px;width:78px;height:17px;background:#c0c0c0;border:1px solid #93a1b6;border-radius:2.5px;box-sizing:border-box;box-shadow:inset 1px 1px 0 #d2d2d2"></div>
<div class="t" style="left:849.5px;width:78px;text-align:center;top:208.86px;font-size:10.8px;color:#000000;letter-spacing:0.1px;">Hierarchie</div>
<div style="left:942px;top:207px;width:12px;height:12px;background:#ffffff;border:1px solid #5b6f8e;box-sizing:border-box"></div>
<svg style="position:absolute;left:942px;top:207px" width="12" height="12" viewBox="0 0 12 12"><path d="M2.4 5.6L4.7 8.6L10 2.6" fill="none" stroke="#1c2a48" stroke-width="2.3" stroke-linecap="round" stroke-linejoin="round"/></svg>
<div style="left:105px;top:223px;width:33px;height:19px;background:#ebebeb;border:1px solid #8f9db3;border-radius:2px;box-sizing:border-box"></div>
<div style="left:138px;top:223px;width:240px;height:19px;background:#ebebeb;border:1px solid #8f9db3;border-radius:2px;box-sizing:border-box"></div>
<div style="left:379px;top:224px;width:17px;height:16px;background:#c6c6c6;border:1px solid #9eabbf;border-radius:2.5px;box-sizing:border-box"></div>
<svg style="position:absolute;left:379px;top:224px" width="17" height="16" viewBox="0 0 17 16" shape-rendering="crispEdges">
<path d="M2.5 9.5V2.5H10" fill="none" stroke="#f6f6f6" stroke-width="1"/><rect x="10" y="2" width="1" height="1" fill="#5a5a5a"/><rect x="3" y="9" width="1" height="1" fill="#5a5a5a"/><rect x="5" y="5.5" width="7" height="7.5" fill="#ffffff"/><rect x="4" y="4" width="11" height="1.6" fill="#6e6e6e"/><rect x="4" y="5" width="1" height="9" fill="#7a7a7a"/><rect x="4" y="13" width="11" height="1" fill="#b8b8b8"/><rect x="12" y="5.5" width="1" height="8" fill="#9a9a9a"/><rect x="13" y="5.5" width="1" height="8" fill="#f2f2f2"/><rect x="14" y="5" width="1" height="8.5" fill="#9a9a9a"/><rect x="13" y="7" width="1" height="2" fill="#5a5a5a"/><path d="M6 7.9L8 9.4L6 10.9Z" fill="#8a8a8a" shape-rendering="auto"/><rect x="9" y="7" width="2" height="1" fill="#7e7e7e"/><rect x="9" y="9" width="2" height="1" fill="#7e7e7e"/><rect x="9" y="11" width="2" height="1" fill="#7e7e7e"/></svg>
<div style="left:397px;top:223px;width:33px;height:19px;background:#ffffff;border:1px solid #8f9db3;border-radius:2px;box-sizing:border-box"></div>
<div style="left:430px;top:223px;width:240px;height:19px;background:#ffffff;border:1px solid #8f9db3;border-radius:2px;box-sizing:border-box"></div>
<div style="left:671px;top:224px;width:17px;height:16px;background:#c6c6c6;border:1px solid #9eabbf;border-radius:2.5px;box-sizing:border-box"></div>
<svg style="position:absolute;left:671px;top:224px" width="17" height="16" viewBox="0 0 17 16" shape-rendering="crispEdges">
<path d="M2.5 9.5V2.5H10" fill="none" stroke="#1f6aa8" stroke-width="1"/><rect x="10" y="2" width="1" height="1" fill="#000"/><rect x="3" y="9" width="1" height="1" fill="#000"/><rect x="5" y="5.5" width="7" height="7.5" fill="#ffffff"/><rect x="4" y="4" width="11" height="1.6" fill="#000000"/><rect x="4" y="5" width="1" height="9" fill="#000"/><rect x="4" y="13" width="11" height="1" fill="#1f6aa8"/><rect x="12" y="5.5" width="1" height="8" fill="#1f6aa8"/><rect x="13" y="5.5" width="1" height="8" fill="#ffffff"/><rect x="14" y="5" width="1" height="8.5" fill="#1f6aa8"/><rect x="13" y="7" width="1" height="2" fill="#000"/><path d="M6 7.9L8 9.4L6 10.9Z" fill="#1a2cff" shape-rendering="auto"/><rect x="9" y="7" width="2" height="1" fill="#ff1a1a"/><rect x="9" y="9" width="2" height="1" fill="#ff1a1a"/><rect x="9" y="11" width="2" height="1" fill="#ff1a1a"/></svg>
<div style="left:690px;top:224px;width:78px;height:17px;background:#c0c0c0;border:1px solid #93a1b6;border-radius:2.5px;box-sizing:border-box;box-shadow:inset 1px 1px 0 #d2d2d2"></div>
<div class="t" style="left:689.5px;width:78px;text-align:center;top:227.86px;font-size:10.8px;color:#000000;">Druck</div>
<div style="left:770px;top:224px;width:78px;height:17px;background:#c0c0c0;border:1px solid #93a1b6;border-radius:2.5px;box-sizing:border-box;box-shadow:inset 1px 1px 0 #d2d2d2"></div>
<div class="t" style="left:769.5px;width:78px;text-align:center;top:227.86px;font-size:10.8px;color:#000000;letter-spacing:-0.15px;">ProdNr Regel</div>
<div style="left:850px;top:224px;width:78px;height:17px;background:#c0c0c0;border:1px solid #93a1b6;border-radius:2.5px;box-sizing:border-box;box-shadow:inset 1px 1px 0 #d2d2d2"></div>
<div class="t" style="left:849.5px;width:78px;text-align:center;top:227.86px;font-size:10.8px;color:#000000;">Relev.Merkmal</div>
<div style="left:962px;top:84px;width:15px;height:158px;background:#cfcfcf;border:1px solid #9aa8bc;border-radius:7px;box-sizing:border-box"></div>
<div style="left:963px;top:163px;width:13px;height:64px;background:#aaaaaa"></div>
<div style="left:963px;top:98px;width:13px;height:1px;background:#9aa8bc"></div>
<div style="left:963px;top:227px;width:13px;height:1px;background:#9aa8bc"></div>
<svg style="position:absolute;left:962px;top:84px" width="15" height="14" viewBox="0 0 15 14"><path d="M3.5 9.5H11.5L7.5 5.5Z" fill="#5f7391"/></svg>
<svg style="position:absolute;left:962px;top:228px" width="15" height="14" viewBox="0 0 15 14"><path d="M3.5 4.5H11.5L7.5 8.5Z" fill="#5f7391"/></svg>
<div style="left:12px;top:247px;width:702px;height:37px;border:1px solid #000;border-radius:10px;box-sizing:border-box"></div>
<div class="t" style="left:27.3px;top:258.86px;font-size:10.8px;color:#000000;letter-spacing:0.33px;transform-origin:0 0;">Erfassung</div>
<div style="left:85px;top:256px;width:120px;height:19px;background:#ebebeb;border:1px solid #8f9db3;border-radius:2px;box-sizing:border-box"></div>
<div class="t" style="left:87.8px;top:260.86px;font-size:10.8px;color:#000000;transform-origin:0 0;">05.02.2020 11:48</div>
<div style="left:205px;top:256px;width:133px;height:19px;background:#ebebeb;border:1px solid #8f9db3;border-radius:2px;box-sizing:border-box"></div>
<div class="t" style="left:207.8px;top:260.86px;font-size:10.8px;color:#000000;letter-spacing:0.26px;transform:scaleX(0.9);transform-origin:0 0;">REFLEX</div>
<div class="t" style="left:381.3px;top:258.86px;font-size:10.8px;color:#000000;letter-spacing:0.22px;transform-origin:0 0;">Änderung</div>
<div style="left:437px;top:256px;width:120px;height:19px;background:#ebebeb;border:1px solid #8f9db3;border-radius:2px;box-sizing:border-box"></div>
<div style="left:557px;top:256px;width:133px;height:19px;background:#ebebeb;border:1px solid #8f9db3;border-radius:2px;box-sizing:border-box"></div>
<div style="left:839px;top:256px;width:89px;height:19px;background:#c0c0c0;border:1px solid #93a1b6;border-radius:2.5px;box-sizing:border-box;box-shadow:inset 1px 1px 0 #d2d2d2"></div>
<div class="t" style="left:838.5px;width:89px;text-align:center;top:260.86px;font-size:10.8px;color:#000000;">Kopieren</div>
<div style="left:5px;top:291px;width:985px;height:1px;background:#7d7d7d"></div>
<div class="t" style="left:17.3px;top:310.86px;font-size:10.8px;color:#000000;letter-spacing:0.12px;transform-origin:0 0;">Abteilung</div>
<div class="t" style="left:149.3px;top:310.86px;font-size:10.8px;color:#000000;letter-spacing:0.07px;transform-origin:0 0;">Produktionsstätte</div>
<div class="t" style="left:281.3px;top:310.86px;font-size:10.8px;color:#000000;transform-origin:0 0;">Materiallager</div>
<div class="t" style="left:447.3px;top:310.86px;font-size:10.8px;color:#000000;transform-origin:0 0;">Lager</div>
<div class="t" style="right:289px;top:310.86px;font-size:10.8px;color:#000000;transform-origin:100% 0;">Folgeabteilung</div>
<div class="t" style="left:724.3px;top:295.86px;font-size:10.8px;color:#000000;letter-spacing:0.19px;transform-origin:0 0;">Vorlaufzeit</div>
<div class="t" style="left:737.3px;top:310.86px;font-size:10.8px;color:#000000;letter-spacing:0.6px;transform-origin:0 0;">(Tag)</div>
<div class="t" style="left:786.3px;top:295.86px;font-size:10.8px;color:#000000;transform-origin:0 0;">Koop.</div>
<div class="t" style="left:783.3px;top:310.86px;font-size:10.8px;color:#000000;transform-origin:0 0;">Bestell.</div>
<div style="left:18px;top:330px;width:34px;height:18px;background:#ddffff;border:1px solid #8f9db3;border-radius:2px;box-sizing:border-box"></div>
<div class="t" style="left:20.8px;top:334.86px;font-size:10.8px;color:#000000;transform-origin:0 0;">10</div>
<div style="left:52px;top:330px;width:80px;height:18px;background:#ddffff;border:1px solid #8f9db3;border-radius:2px;box-sizing:border-box"></div>
<div class="t" style="left:54.8px;top:334.86px;font-size:10.8px;color:#000000;transform:scaleX(0.9);transform-origin:0 0;">GESTB</div>
<div style="left:133px;top:331px;width:17px;height:16px;background:#c6c6c6;border:1px solid #9eabbf;border-radius:2.5px;box-sizing:border-box"></div>
<svg style="position:absolute;left:133px;top:331px" width="17" height="16" viewBox="0 0 17 16" shape-rendering="crispEdges">
<path d="M2.5 9.5V2.5H10" fill="none" stroke="#f6f6f6" stroke-width="1"/><rect x="10" y="2" width="1" height="1" fill="#5a5a5a"/><rect x="3" y="9" width="1" height="1" fill="#5a5a5a"/><rect x="5" y="5.5" width="7" height="7.5" fill="#ffffff"/><rect x="4" y="4" width="11" height="1.6" fill="#6e6e6e"/><rect x="4" y="5" width="1" height="9" fill="#7a7a7a"/><rect x="4" y="13" width="11" height="1" fill="#b8b8b8"/><rect x="12" y="5.5" width="1" height="8" fill="#9a9a9a"/><rect x="13" y="5.5" width="1" height="8" fill="#f2f2f2"/><rect x="14" y="5" width="1" height="8.5" fill="#9a9a9a"/><rect x="13" y="7" width="1" height="2" fill="#5a5a5a"/><path d="M6 7.9L8 9.4L6 10.9Z" fill="#8a8a8a" shape-rendering="auto"/><rect x="9" y="7" width="2" height="1" fill="#7e7e7e"/><rect x="9" y="9" width="2" height="1" fill="#7e7e7e"/><rect x="9" y="11" width="2" height="1" fill="#7e7e7e"/></svg>
<div style="left:150px;top:330px;width:34px;height:18px;background:#ddffff;border:1px solid #8f9db3;border-radius:2px;box-sizing:border-box"></div>
<div class="t" style="left:152.8px;top:334.86px;font-size:10.8px;color:#000000;transform-origin:0 0;">10</div>
<div style="left:184px;top:330px;width:80px;height:18px;background:#ddffff;border:1px solid #8f9db3;border-radius:2px;box-sizing:border-box"></div>
<div class="t" style="left:186.8px;top:334.86px;font-size:10.8px;color:#000000;letter-spacing:-0.1px;transform-origin:0 0;">Ungarn 1</div>
<div style="left:265px;top:331px;width:17px;height:16px;background:#c6c6c6;border:1px solid #9eabbf;border-radius:2.5px;box-sizing:border-box"></div>
<svg style="position:absolute;left:265px;top:331px" width="17" height="16" viewBox="0 0 17 16" shape-rendering="crispEdges">
<path d="M2.5 9.5V2.5H10" fill="none" stroke="#f6f6f6" stroke-width="1"/><rect x="10" y="2" width="1" height="1" fill="#5a5a5a"/><rect x="3" y="9" width="1" height="1" fill="#5a5a5a"/><rect x="5" y="5.5" width="7" height="7.5" fill="#ffffff"/><rect x="4" y="4" width="11" height="1.6" fill="#6e6e6e"/><rect x="4" y="5" width="1" height="9" fill="#7a7a7a"/><rect x="4" y="13" width="11" height="1" fill="#b8b8b8"/><rect x="12" y="5.5" width="1" height="8" fill="#9a9a9a"/><rect x="13" y="5.5" width="1" height="8" fill="#f2f2f2"/><rect x="14" y="5" width="1" height="8.5" fill="#9a9a9a"/><rect x="13" y="7" width="1" height="2" fill="#5a5a5a"/><path d="M6 7.9L8 9.4L6 10.9Z" fill="#8a8a8a" shape-rendering="auto"/><rect x="9" y="7" width="2" height="1" fill="#7e7e7e"/><rect x="9" y="9" width="2" height="1" fill="#7e7e7e"/><rect x="9" y="11" width="2" height="1" fill="#7e7e7e"/></svg>
<div style="left:282px;top:330px;width:27px;height:18px;background:#ddffff;border:1px solid #8f9db3;border-radius:2px;box-sizing:border-box"></div>
<div class="t" style="left:284.8px;top:334.86px;font-size:10.8px;color:#000000;transform-origin:0 0;">3</div>
<div style="left:309px;top:330px;width:120px;height:18px;background:#ddffff;border:1px solid #8f9db3;border-radius:2px;box-sizing:border-box"></div>
<div class="t" style="left:311.8px;top:334.86px;font-size:10.8px;color:#000000;transform-origin:0 0;">Materiallager</div>
<div style="left:430px;top:331px;width:17px;height:16px;background:#c6c6c6;border:1px solid #9eabbf;border-radius:2.5px;box-sizing:border-box"></div>
<svg style="position:absolute;left:430px;top:331px" width="17" height="16" viewBox="0 0 17 16" shape-rendering="crispEdges">
<path d="M2.5 9.5V2.5H10" fill="none" stroke="#f6f6f6" stroke-width="1"/><rect x="10" y="2" width="1" height="1" fill="#5a5a5a"/><rect x="3" y="9" width="1" height="1" fill="#5a5a5a"/><rect x="5" y="5.5" width="7" height="7.5" fill="#ffffff"/><rect x="4" y="4" width="11" height="1.6" fill="#6e6e6e"/><rect x="4" y="5" width="1" height="9" fill="#7a7a7a"/><rect x="4" y="13" width="11" height="1" fill="#b8b8b8"/><rect x="12" y="5.5" width="1" height="8" fill="#9a9a9a"/><rect x="13" y="5.5" width="1" height="8" fill="#f2f2f2"/><rect x="14" y="5" width="1" height="8.5" fill="#9a9a9a"/><rect x="13" y="7" width="1" height="2" fill="#5a5a5a"/><path d="M6 7.9L8 9.4L6 10.9Z" fill="#8a8a8a" shape-rendering="auto"/><rect x="9" y="7" width="2" height="1" fill="#7e7e7e"/><rect x="9" y="9" width="2" height="1" fill="#7e7e7e"/><rect x="9" y="11" width="2" height="1" fill="#7e7e7e"/></svg>
<div style="left:448px;top:330px;width:26px;height:18px;background:#ddffff;border:1px solid #8f9db3;border-radius:2px;box-sizing:border-box"></div>
<div class="t" style="left:450.8px;top:334.86px;font-size:10.8px;color:#000000;transform-origin:0 0;">888</div>
<div style="left:474px;top:330px;width:120px;height:18px;background:#ddffff;border:1px solid #8f9db3;border-radius:2px;box-sizing:border-box"></div>
<div class="t" style="left:476.8px;top:334.86px;font-size:10.8px;color:#000000;letter-spacing:-0.2px;transform-origin:0 0;">Sammellager</div>
<div style="left:595px;top:331px;width:17px;height:16px;background:#c6c6c6;border:1px solid #9eabbf;border-radius:2.5px;box-sizing:border-box"></div>
<svg style="position:absolute;left:595px;top:331px" width="17" height="16" viewBox="0 0 17 16" shape-rendering="crispEdges">
<path d="M2.5 9.5V2.5H10" fill="none" stroke="#f6f6f6" stroke-width="1"/><rect x="10" y="2" width="1" height="1" fill="#5a5a5a"/><rect x="3" y="9" width="1" height="1" fill="#5a5a5a"/><rect x="5" y="5.5" width="7" height="7.5" fill="#ffffff"/><rect x="4" y="4" width="11" height="1.6" fill="#6e6e6e"/><rect x="4" y="5" width="1" height="9" fill="#7a7a7a"/><rect x="4" y="13" width="11" height="1" fill="#b8b8b8"/><rect x="12" y="5.5" width="1" height="8" fill="#9a9a9a"/><rect x="13" y="5.5" width="1" height="8" fill="#f2f2f2"/><rect x="14" y="5" width="1" height="8.5" fill="#9a9a9a"/><rect x="13" y="7" width="1" height="2" fill="#5a5a5a"/><path d="M6 7.9L8 9.4L6 10.9Z" fill="#8a8a8a" shape-rendering="auto"/><rect x="9" y="7" width="2" height="1" fill="#7e7e7e"/><rect x="9" y="9" width="2" height="1" fill="#7e7e7e"/><rect x="9" y="11" width="2" height="1" fill="#7e7e7e"/></svg>
<div style="left:613px;top:330px;width:27px;height:18px;background:#ddffff;border:1px solid #8f9db3;border-radius:2px;box-sizing:border-box"></div>
<div class="t" style="left:615.8px;top:334.86px;font-size:10.8px;color:#000000;transform-origin:0 0;">35</div>
<div style="left:640px;top:330px;width:80px;height:18px;background:#ddffff;border:1px solid #8f9db3;border-radius:2px;box-sizing:border-box"></div>
<div class="t" style="left:642.8px;top:334.86px;font-size:10.8px;color:#000000;transform:scaleX(0.9);transform-origin:0 0;">WPOLS</div>
<div style="left:721px;top:331px;width:17px;height:16px;background:#c6c6c6;border:1px solid #9eabbf;border-radius:2.5px;box-sizing:border-box"></div>
<svg style="position:absolute;left:721px;top:331px" width="17" height="16" viewBox="0 0 17 16" shape-rendering="crispEdges">
<path d="M2.5 9.5V2.5H10" fill="none" stroke="#f6f6f6" stroke-width="1"/><rect x="10" y="2" width="1" height="1" fill="#5a5a5a"/><rect x="3" y="9" width="1" height="1" fill="#5a5a5a"/><rect x="5" y="5.5" width="7" height="7.5" fill="#ffffff"/><rect x="4" y="4" width="11" height="1.6" fill="#6e6e6e"/><rect x="4" y="5" width="1" height="9" fill="#7a7a7a"/><rect x="4" y="13" width="11" height="1" fill="#b8b8b8"/><rect x="12" y="5.5" width="1" height="8" fill="#9a9a9a"/><rect x="13" y="5.5" width="1" height="8" fill="#f2f2f2"/><rect x="14" y="5" width="1" height="8.5" fill="#9a9a9a"/><rect x="13" y="7" width="1" height="2" fill="#5a5a5a"/><path d="M6 7.9L8 9.4L6 10.9Z" fill="#8a8a8a" shape-rendering="auto"/><rect x="9" y="7" width="2" height="1" fill="#7e7e7e"/><rect x="9" y="9" width="2" height="1" fill="#7e7e7e"/><rect x="9" y="11" width="2" height="1" fill="#7e7e7e"/></svg>
<div style="left:738px;top:330px;width:27px;height:18px;background:#ddffff;border:1px solid #8f9db3;border-radius:2px;box-sizing:border-box"></div>
<div class="t" style="right:232px;top:334.86px;font-size:10.8px;color:#000000;transform-origin:100% 0;">1</div>
<div style="left:792px;top:330px;width:18px;height:18px;background:#ddffff"></div>
<div style="left:792px;top:333px;width:12px;height:12px;background:#ffffff;border:1px solid #5b6f8e;box-sizing:border-box"></div>
<div style="left:826px;top:331px;width:89px;height:16px;background:#c0c0c0;border:1px solid #93a1b6;border-radius:2.5px;box-sizing:border-box;box-shadow:inset 1px 1px 0 #d2d2d2"></div>
<div style="left:826px;top:331px;width:89px;height:14px;overflow:hidden"><div class="t" style="left:0;width:89px;text-align:center;top:3.86px;font-size:10.8px;color:#000000;letter-spacing:0.26px;">Bedarfsprüfung</div></div>
<div style="left:18px;top:348px;width:34px;height:19px;background:#ebebeb;border:1px solid #8f9db3;border-radius:2px;box-sizing:border-box"></div>
<div class="t" style="left:20.8px;top:352.86px;font-size:10.8px;color:#000000;transform-origin:0 0;">35</div>
<div style="left:52px;top:348px;width:80px;height:19px;background:#ebebeb;border:1px solid #8f9db3;border-radius:2px;box-sizing:border-box"></div>
<div class="t" style="left:54.8px;top:352.86px;font-size:10.8px;color:#000000;transform:scaleX(0.9);transform-origin:0 0;">SCHA</div>
<div style="left:133px;top:349px;width:17px;height:16px;background:#c6c6c6;border:1px solid #9eabbf;border-radius:2.5px;box-sizing:border-box"></div>
<svg style="position:absolute;left:133px;top:349px" width="17" height="16" viewBox="0 0 17 16" shape-rendering="crispEdges">
<path d="M2.5 9.5V2.5H10" fill="none" stroke="#f6f6f6" stroke-width="1"/><rect x="10" y="2" width="1" height="1" fill="#5a5a5a"/><rect x="3" y="9" width="1" height="1" fill="#5a5a5a"/><rect x="5" y="5.5" width="7" height="7.5" fill="#ffffff"/><rect x="4" y="4" width="11" height="1.6" fill="#6e6e6e"/><rect x="4" y="5" width="1" height="9" fill="#7a7a7a"/><rect x="4" y="13" width="11" height="1" fill="#b8b8b8"/><rect x="12" y="5.5" width="1" height="8" fill="#9a9a9a"/><rect x="13" y="5.5" width="1" height="8" fill="#f2f2f2"/><rect x="14" y="5" width="1" height="8.5" fill="#9a9a9a"/><rect x="13" y="7" width="1" height="2" fill="#5a5a5a"/><path d="M6 7.9L8 9.4L6 10.9Z" fill="#8a8a8a" shape-rendering="auto"/><rect x="9" y="7" width="2" height="1" fill="#7e7e7e"/><rect x="9" y="9" width="2" height="1" fill="#7e7e7e"/><rect x="9" y="11" width="2" height="1" fill="#7e7e7e"/></svg>
<div style="left:150px;top:348px;width:34px;height:19px;background:#ebebeb;border:1px solid #8f9db3;border-radius:2px;box-sizing:border-box"></div>
<div class="t" style="left:152.8px;top:352.86px;font-size:10.8px;color:#000000;transform-origin:0 0;">10</div>
<div style="left:184px;top:348px;width:80px;height:19px;background:#ebebeb;border:1px solid #8f9db3;border-radius:2px;box-sizing:border-box"></div>
<div class="t" style="left:186.8px;top:352.86px;font-size:10.8px;color:#000000;letter-spacing:-0.1px;transform-origin:0 0;">Ungarn 1</div>
<div style="left:265px;top:349px;width:17px;height:16px;background:#c6c6c6;border:1px solid #9eabbf;border-radius:2.5px;box-sizing:border-box"></div>
<svg style="position:absolute;left:265px;top:349px" width="17" height="16" viewBox="0 0 17 16" shape-rendering="crispEdges">
<path d="M2.5 9.5V2.5H10" fill="none" stroke="#f6f6f6" stroke-width="1"/><rect x="10" y="2" width="1" height="1" fill="#5a5a5a"/><rect x="3" y="9" width="1" height="1" fill="#5a5a5a"/><rect x="5" y="5.5" width="7" height="7.5" fill="#ffffff"/><rect x="4" y="4" width="11" height="1.6" fill="#6e6e6e"/><rect x="4" y="5" width="1" height="9" fill="#7a7a7a"/><rect x="4" y="13" width="11" height="1" fill="#b8b8b8"/><rect x="12" y="5.5" width="1" height="8" fill="#9a9a9a"/><rect x="13" y="5.5" width="1" height="8" fill="#f2f2f2"/><rect x="14" y="5" width="1" height="8.5" fill="#9a9a9a"/><rect x="13" y="7" width="1" height="2" fill="#5a5a5a"/><path d="M6 7.9L8 9.4L6 10.9Z" fill="#8a8a8a" shape-rendering="auto"/><rect x="9" y="7" width="2" height="1" fill="#7e7e7e"/><rect x="9" y="9" width="2" height="1" fill="#7e7e7e"/><rect x="9" y="11" width="2" height="1" fill="#7e7e7e"/></svg>
<div style="left:282px;top:348px;width:27px;height:19px;background:#ffffff;border:1px solid #8f9db3;border-radius:2px;box-sizing:border-box"></div>
<div class="t" style="left:284.8px;top:352.86px;font-size:10.8px;color:#000000;transform-origin:0 0;">3</div>
<div style="left:309px;top:348px;width:120px;height:19px;background:#ffffff;border:1px solid #8f9db3;border-radius:2px;box-sizing:border-box"></div>
<div class="t" style="left:311.8px;top:352.86px;font-size:10.8px;color:#000000;transform-origin:0 0;">Materiallager</div>
<div style="left:430px;top:349px;width:17px;height:16px;background:#c6c6c6;border:1px solid #9eabbf;border-radius:2.5px;box-sizing:border-box"></div>
<svg style="position:absolute;left:430px;top:349px" width="17" height="16" viewBox="0 0 17 16" shape-rendering="crispEdges">
<path d="M2.5 9.5V2.5H10" fill="none" stroke="#f6f6f6" stroke-width="1"/><rect x="10" y="2" width="1" height="1" fill="#5a5a5a"/><rect x="3" y="9" width="1" height="1" fill="#5a5a5a"/><rect x="5" y="5.5" width="7" height="7.5" fill="#ffffff"/><rect x="4" y="4" width="11" height="1.6" fill="#6e6e6e"/><rect x="4" y="5" width="1" height="9" fill="#7a7a7a"/><rect x="4" y="13" width="11" height="1" fill="#b8b8b8"/><rect x="12" y="5.5" width="1" height="8" fill="#9a9a9a"/><rect x="13" y="5.5" width="1" height="8" fill="#f2f2f2"/><rect x="14" y="5" width="1" height="8.5" fill="#9a9a9a"/><rect x="13" y="7" width="1" height="2" fill="#5a5a5a"/><path d="M6 7.9L8 9.4L6 10.9Z" fill="#8a8a8a" shape-rendering="auto"/><rect x="9" y="7" width="2" height="1" fill="#7e7e7e"/><rect x="9" y="9" width="2" height="1" fill="#7e7e7e"/><rect x="9" y="11" width="2" height="1" fill="#7e7e7e"/></svg>
<div style="left:448px;top:348px;width:26px;height:19px;background:#ffffff;border:1px solid #8f9db3;border-radius:2px;box-sizing:border-box"></div>
<div class="t" style="left:450.8px;top:352.86px;font-size:10.8px;color:#000000;transform-origin:0 0;">888</div>
<div style="left:474px;top:348px;width:120px;height:19px;background:#ffffff;border:1px solid #8f9db3;border-radius:2px;box-sizing:border-box"></div>
<div class="t" style="left:476.8px;top:352.86px;font-size:10.8px;color:#000000;letter-spacing:-0.2px;transform-origin:0 0;">Sammellager</div>
<div style="left:595px;top:349px;width:17px;height:16px;background:#c6c6c6;border:1px solid #9eabbf;border-radius:2.5px;box-sizing:border-box"></div>
<svg style="position:absolute;left:595px;top:349px" width="17" height="16" viewBox="0 0 17 16" shape-rendering="crispEdges">
<path d="M2.5 9.5V2.5H10" fill="none" stroke="#f6f6f6" stroke-width="1"/><rect x="10" y="2" width="1" height="1" fill="#5a5a5a"/><rect x="3" y="9" width="1" height="1" fill="#5a5a5a"/><rect x="5" y="5.5" width="7" height="7.5" fill="#ffffff"/><rect x="4" y="4" width="11" height="1.6" fill="#6e6e6e"/><rect x="4" y="5" width="1" height="9" fill="#7a7a7a"/><rect x="4" y="13" width="11" height="1" fill="#b8b8b8"/><rect x="12" y="5.5" width="1" height="8" fill="#9a9a9a"/><rect x="13" y="5.5" width="1" height="8" fill="#f2f2f2"/><rect x="14" y="5" width="1" height="8.5" fill="#9a9a9a"/><rect x="13" y="7" width="1" height="2" fill="#5a5a5a"/><path d="M6 7.9L8 9.4L6 10.9Z" fill="#8a8a8a" shape-rendering="auto"/><rect x="9" y="7" width="2" height="1" fill="#7e7e7e"/><rect x="9" y="9" width="2" height="1" fill="#7e7e7e"/><rect x="9" y="11" width="2" height="1" fill="#7e7e7e"/></svg>
<div style="left:613px;top:348px;width:27px;height:19px;background:#ebebeb;border:1px solid #8f9db3;border-radius:2px;box-sizing:border-box"></div>
<div class="t" style="left:615.8px;top:352.86px;font-size:10.8px;color:#000000;transform-origin:0 0;">40</div>
<div style="left:640px;top:348px;width:80px;height:19px;background:#ebebeb;border:1px solid #8f9db3;border-radius:2px;box-sizing:border-box"></div>
<div class="t" style="left:642.8px;top:352.86px;font-size:10.8px;color:#000000;transform:scaleX(0.9);transform-origin:0 0;">WPOLS</div>
<div style="left:721px;top:349px;width:17px;height:16px;background:#c6c6c6;border:1px solid #9eabbf;border-radius:2.5px;box-sizing:border-box"></div>
<svg style="position:absolute;left:721px;top:349px" width="17" height="16" viewBox="0 0 17 16" shape-rendering="crispEdges">
<path d="M2.5 9.5V2.5H10" fill="none" stroke="#f6f6f6" stroke-width="1"/><rect x="10" y="2" width="1" height="1" fill="#5a5a5a"/><rect x="3" y="9" width="1" height="1" fill="#5a5a5a"/><rect x="5" y="5.5" width="7" height="7.5" fill="#ffffff"/><rect x="4" y="4" width="11" height="1.6" fill="#6e6e6e"/><rect x="4" y="5" width="1" height="9" fill="#7a7a7a"/><rect x="4" y="13" width="11" height="1" fill="#b8b8b8"/><rect x="12" y="5.5" width="1" height="8" fill="#9a9a9a"/><rect x="13" y="5.5" width="1" height="8" fill="#f2f2f2"/><rect x="14" y="5" width="1" height="8.5" fill="#9a9a9a"/><rect x="13" y="7" width="1" height="2" fill="#5a5a5a"/><path d="M6 7.9L8 9.4L6 10.9Z" fill="#8a8a8a" shape-rendering="auto"/><rect x="9" y="7" width="2" height="1" fill="#7e7e7e"/><rect x="9" y="9" width="2" height="1" fill="#7e7e7e"/><rect x="9" y="11" width="2" height="1" fill="#7e7e7e"/></svg>
<div style="left:738px;top:348px;width:27px;height:19px;background:#ffffff;border:1px solid #8f9db3;border-radius:2px;box-sizing:border-box"></div>
<div class="t" style="right:232px;top:352.86px;font-size:10.8px;color:#000000;transform-origin:100% 0;">1</div>
<div style="left:792px;top:351px;width:12px;height:12px;background:#ffffff;border:1px solid #5b6f8e;box-sizing:border-box"></div>
<div style="left:826px;top:349px;width:89px;height:16px;background:#c0c0c0;border:1px solid #93a1b6;border-radius:2.5px;box-sizing:border-box;box-shadow:inset 1px 1px 0 #d2d2d2"></div>
<div style="left:826px;top:349px;width:89px;height:14px;overflow:hidden"><div class="t" style="left:0;width:89px;text-align:center;top:3.86px;font-size:10.8px;color:#000000;letter-spacing:0.26px;">Bedarfsprüfung</div></div>
<div style="left:18px;top:367px;width:34px;height:19px;background:#ebebeb;border:1px solid #8f9db3;border-radius:2px;box-sizing:border-box"></div>
<div class="t" style="left:20.8px;top:371.86px;font-size:10.8px;color:#000000;transform-origin:0 0;">20</div>
<div style="left:52px;top:367px;width:80px;height:19px;background:#ebebeb;border:1px solid #8f9db3;border-radius:2px;box-sizing:border-box"></div>
<div class="t" style="left:54.8px;top:371.86px;font-size:10.8px;color:#000000;transform:scaleX(0.9);transform-origin:0 0;">ZUSCH</div>
<div style="left:133px;top:368px;width:17px;height:16px;background:#c6c6c6;border:1px solid #9eabbf;border-radius:2.5px;box-sizing:border-box"></div>
<svg style="position:absolute;left:133px;top:368px" width="17" height="16" viewBox="0 0 17 16" shape-rendering="crispEdges">
<path d="M2.5 9.5V2.5H10" fill="none" stroke="#f6f6f6" stroke-width="1"/><rect x="10" y="2" width="1" height="1" fill="#5a5a5a"/><rect x="3" y="9" width="1" height="1" fill="#5a5a5a"/><rect x="5" y="5.5" width="7" height="7.5" fill="#ffffff"/><rect x="4" y="4" width="11" height="1.6" fill="#6e6e6e"/><rect x="4" y="5" width="1" height="9" fill="#7a7a7a"/><rect x="4" y="13" width="11" height="1" fill="#b8b8b8"/><rect x="12" y="5.5" width="1" height="8" fill="#9a9a9a"/><rect x="13" y="5.5" width="1" height="8" fill="#f2f2f2"/><rect x="14" y="5" width="1" height="8.5" fill="#9a9a9a"/><rect x="13" y="7" width="1" height="2" fill="#5a5a5a"/><path d="M6 7.9L8 9.4L6 10.9Z" fill="#8a8a8a" shape-rendering="auto"/><rect x="9" y="7" width="2" height="1" fill="#7e7e7e"/><rect x="9" y="9" width="2" height="1" fill="#7e7e7e"/><rect x="9" y="11" width="2" height="1" fill="#7e7e7e"/></svg>
<div style="left:150px;top:367px;width:34px;height:19px;background:#ebebeb;border:1px solid #8f9db3;border-radius:2px;box-sizing:border-box"></div>
<div class="t" style="left:152.8px;top:371.86px;font-size:10.8px;color:#000000;transform-origin:0 0;">10</div>
<div style="left:184px;top:367px;width:80px;height:19px;background:#ebebeb;border:1px solid #8f9db3;border-radius:2px;box-sizing:border-box"></div>
<div class="t" style="left:186.8px;top:371.86px;font-size:10.8px;color:#000000;letter-spacing:-0.1px;transform-origin:0 0;">Ungarn 1</div>
<div style="left:265px;top:368px;width:17px;height:16px;background:#c6c6c6;border:1px solid #9eabbf;border-radius:2.5px;box-sizing:border-box"></div>
<svg style="position:absolute;left:265px;top:368px" width="17" height="16" viewBox="0 0 17 16" shape-rendering="crispEdges">
<path d="M2.5 9.5V2.5H10" fill="none" stroke="#f6f6f6" stroke-width="1"/><rect x="10" y="2" width="1" height="1" fill="#5a5a5a"/><rect x="3" y="9" width="1" height="1" fill="#5a5a5a"/><rect x="5" y="5.5" width="7" height="7.5" fill="#ffffff"/><rect x="4" y="4" width="11" height="1.6" fill="#6e6e6e"/><rect x="4" y="5" width="1" height="9" fill="#7a7a7a"/><rect x="4" y="13" width="11" height="1" fill="#b8b8b8"/><rect x="12" y="5.5" width="1" height="8" fill="#9a9a9a"/><rect x="13" y="5.5" width="1" height="8" fill="#f2f2f2"/><rect x="14" y="5" width="1" height="8.5" fill="#9a9a9a"/><rect x="13" y="7" width="1" height="2" fill="#5a5a5a"/><path d="M6 7.9L8 9.4L6 10.9Z" fill="#8a8a8a" shape-rendering="auto"/><rect x="9" y="7" width="2" height="1" fill="#7e7e7e"/><rect x="9" y="9" width="2" height="1" fill="#7e7e7e"/><rect x="9" y="11" width="2" height="1" fill="#7e7e7e"/></svg>
<div style="left:282px;top:367px;width:27px;height:19px;background:#ffffff;border:1px solid #8f9db3;border-radius:2px;box-sizing:border-box"></div>
<div class="t" style="left:284.8px;top:371.86px;font-size:10.8px;color:#000000;transform-origin:0 0;">3</div>
<div style="left:309px;top:367px;width:120px;height:19px;background:#ffffff;border:1px solid #8f9db3;border-radius:2px;box-sizing:border-box"></div>
<div class="t" style="left:311.8px;top:371.86px;font-size:10.8px;color:#000000;transform-origin:0 0;">Materiallager</div>
<div style="left:430px;top:368px;width:17px;height:16px;background:#c6c6c6;border:1px solid #9eabbf;border-radius:2.5px;box-sizing:border-box"></div>
<svg style="position:absolute;left:430px;top:368px" width="17" height="16" viewBox="0 0 17 16" shape-rendering="crispEdges">
<path d="M2.5 9.5V2.5H10" fill="none" stroke="#f6f6f6" stroke-width="1"/><rect x="10" y="2" width="1" height="1" fill="#5a5a5a"/><rect x="3" y="9" width="1" height="1" fill="#5a5a5a"/><rect x="5" y="5.5" width="7" height="7.5" fill="#ffffff"/><rect x="4" y="4" width="11" height="1.6" fill="#6e6e6e"/><rect x="4" y="5" width="1" height="9" fill="#7a7a7a"/><rect x="4" y="13" width="11" height="1" fill="#b8b8b8"/><rect x="12" y="5.5" width="1" height="8" fill="#9a9a9a"/><rect x="13" y="5.5" width="1" height="8" fill="#f2f2f2"/><rect x="14" y="5" width="1" height="8.5" fill="#9a9a9a"/><rect x="13" y="7" width="1" height="2" fill="#5a5a5a"/><path d="M6 7.9L8 9.4L6 10.9Z" fill="#8a8a8a" shape-rendering="auto"/><rect x="9" y="7" width="2" height="1" fill="#7e7e7e"/><rect x="9" y="9" width="2" height="1" fill="#7e7e7e"/><rect x="9" y="11" width="2" height="1" fill="#7e7e7e"/></svg>
<div style="left:448px;top:367px;width:26px;height:19px;background:#ffffff;border:1px solid #8f9db3;border-radius:2px;box-sizing:border-box"></div>
<div class="t" style="left:450.8px;top:371.86px;font-size:10.8px;color:#000000;transform-origin:0 0;">888</div>
<div style="left:474px;top:367px;width:120px;height:19px;background:#ffffff;border:1px solid #8f9db3;border-radius:2px;box-sizing:border-box"></div>
<div class="t" style="left:476.8px;top:371.86px;font-size:10.8px;color:#000000;letter-spacing:-0.2px;transform-origin:0 0;">Sammellager</div>
<div style="left:595px;top:368px;width:17px;height:16px;background:#c6c6c6;border:1px solid #9eabbf;border-radius:2.5px;box-sizing:border-box"></div>
<svg style="position:absolute;left:595px;top:368px" width="17" height="16" viewBox="0 0 17 16" shape-rendering="crispEdges">
<path d="M2.5 9.5V2.5H10" fill="none" stroke="#f6f6f6" stroke-width="1"/><rect x="10" y="2" width="1" height="1" fill="#5a5a5a"/><rect x="3" y="9" width="1" height="1" fill="#5a5a5a"/><rect x="5" y="5.5" width="7" height="7.5" fill="#ffffff"/><rect x="4" y="4" width="11" height="1.6" fill="#6e6e6e"/><rect x="4" y="5" width="1" height="9" fill="#7a7a7a"/><rect x="4" y="13" width="11" height="1" fill="#b8b8b8"/><rect x="12" y="5.5" width="1" height="8" fill="#9a9a9a"/><rect x="13" y="5.5" width="1" height="8" fill="#f2f2f2"/><rect x="14" y="5" width="1" height="8.5" fill="#9a9a9a"/><rect x="13" y="7" width="1" height="2" fill="#5a5a5a"/><path d="M6 7.9L8 9.4L6 10.9Z" fill="#8a8a8a" shape-rendering="auto"/><rect x="9" y="7" width="2" height="1" fill="#7e7e7e"/><rect x="9" y="9" width="2" height="1" fill="#7e7e7e"/><rect x="9" y="11" width="2" height="1" fill="#7e7e7e"/></svg>
<div style="left:613px;top:367px;width:27px;height:19px;background:#ebebeb;border:1px solid #8f9db3;border-radius:2px;box-sizing:border-box"></div>
<div class="t" style="left:615.8px;top:371.86px;font-size:10.8px;color:#000000;transform-origin:0 0;">30</div>
<div style="left:640px;top:367px;width:80px;height:19px;background:#ebebeb;border:1px solid #8f9db3;border-radius:2px;box-sizing:border-box"></div>
<div class="t" style="left:642.8px;top:371.86px;font-size:10.8px;color:#000000;transform:scaleX(0.9);transform-origin:0 0;">NAEH</div>
<div style="left:721px;top:368px;width:17px;height:16px;background:#c6c6c6;border:1px solid #9eabbf;border-radius:2.5px;box-sizing:border-box"></div>
<svg style="position:absolute;left:721px;top:368px" width="17" height="16" viewBox="0 0 17 16" shape-rendering="crispEdges">
<path d="M2.5 9.5V2.5H10" fill="none" stroke="#f6f6f6" stroke-width="1"/><rect x="10" y="2" width="1" height="1" fill="#5a5a5a"/><rect x="3" y="9" width="1" height="1" fill="#5a5a5a"/><rect x="5" y="5.5" width="7" height="7.5" fill="#ffffff"/><rect x="4" y="4" width="11" height="1.6" fill="#6e6e6e"/><rect x="4" y="5" width="1" height="9" fill="#7a7a7a"/><rect x="4" y="13" width="11" height="1" fill="#b8b8b8"/><rect x="12" y="5.5" width="1" height="8" fill="#9a9a9a"/><rect x="13" y="5.5" width="1" height="8" fill="#f2f2f2"/><rect x="14" y="5" width="1" height="8.5" fill="#9a9a9a"/><rect x="13" y="7" width="1" height="2" fill="#5a5a5a"/><path d="M6 7.9L8 9.4L6 10.9Z" fill="#8a8a8a" shape-rendering="auto"/><rect x="9" y="7" width="2" height="1" fill="#7e7e7e"/><rect x="9" y="9" width="2" height="1" fill="#7e7e7e"/><rect x="9" y="11" width="2" height="1" fill="#7e7e7e"/></svg>
<div style="left:738px;top:367px;width:27px;height:19px;background:#ffffff;border:1px solid #8f9db3;border-radius:2px;box-sizing:border-box"></div>
<div class="t" style="right:232px;top:371.86px;font-size:10.8px;color:#000000;transform-origin:100% 0;">1</div>
<div style="left:792px;top:370px;width:12px;height:12px;background:#ffffff;border:1px solid #5b6f8e;box-sizing:border-box"></div>
<div style="left:826px;top:368px;width:89px;height:16px;background:#c0c0c0;border:1px solid #93a1b6;border-radius:2.5px;box-sizing:border-box;box-shadow:inset 1px 1px 0 #d2d2d2"></div>
<div style="left:826px;top:368px;width:89px;height:14px;overflow:hidden"><div class="t" style="left:0;width:89px;text-align:center;top:3.86px;font-size:10.8px;color:#000000;letter-spacing:0.26px;">Bedarfsprüfung</div></div>
<div style="left:18px;top:386px;width:34px;height:18px;background:#ebebeb;border:1px solid #8f9db3;border-radius:2px;box-sizing:border-box"></div>
<div class="t" style="left:20.8px;top:390.86px;font-size:10.8px;color:#000000;transform-origin:0 0;">30</div>
<div style="left:52px;top:386px;width:80px;height:18px;background:#ebebeb;border:1px solid #8f9db3;border-radius:2px;box-sizing:border-box"></div>
<div class="t" style="left:54.8px;top:390.86px;font-size:10.8px;color:#000000;transform:scaleX(0.9);transform-origin:0 0;">NAEH</div>
<div style="left:133px;top:387px;width:17px;height:16px;background:#c6c6c6;border:1px solid #9eabbf;border-radius:2.5px;box-sizing:border-box"></div>
<svg style="position:absolute;left:133px;top:387px" width="17" height="16" viewBox="0 0 17 16" shape-rendering="crispEdges">
<path d="M2.5 9.5V2.5H10" fill="none" stroke="#f6f6f6" stroke-width="1"/><rect x="10" y="2" width="1" height="1" fill="#5a5a5a"/><rect x="3" y="9" width="1" height="1" fill="#5a5a5a"/><rect x="5" y="5.5" width="7" height="7.5" fill="#ffffff"/><rect x="4" y="4" width="11" height="1.6" fill="#6e6e6e"/><rect x="4" y="5" width="1" height="9" fill="#7a7a7a"/><rect x="4" y="13" width="11" height="1" fill="#b8b8b8"/><rect x="12" y="5.5" width="1" height="8" fill="#9a9a9a"/><rect x="13" y="5.5" width="1" height="8" fill="#f2f2f2"/><rect x="14" y="5" width="1" height="8.5" fill="#9a9a9a"/><rect x="13" y="7" width="1" height="2" fill="#5a5a5a"/><path d="M6 7.9L8 9.4L6 10.9Z" fill="#8a8a8a" shape-rendering="auto"/><rect x="9" y="7" width="2" height="1" fill="#7e7e7e"/><rect x="9" y="9" width="2" height="1" fill="#7e7e7e"/><rect x="9" y="11" width="2" height="1" fill="#7e7e7e"/></svg>
<div style="left:150px;top:386px;width:34px;height:18px;background:#ebebeb;border:1px solid #8f9db3;border-radius:2px;box-sizing:border-box"></div>
<div class="t" style="left:152.8px;top:390.86px;font-size:10.8px;color:#000000;transform-origin:0 0;">10</div>
<div style="left:184px;top:386px;width:80px;height:18px;background:#ebebeb;border:1px solid #8f9db3;border-radius:2px;box-sizing:border-box"></div>
<div class="t" style="left:186.8px;top:390.86px;font-size:10.8px;color:#000000;letter-spacing:-0.1px;transform-origin:0 0;">Ungarn 1</div>
<div style="left:265px;top:387px;width:17px;height:16px;background:#c6c6c6;border:1px solid #9eabbf;border-radius:2.5px;box-sizing:border-box"></div>
<svg style="position:absolute;left:265px;top:387px" width="17" height="16" viewBox="0 0 17 16" shape-rendering="crispEdges">
<path d="M2.5 9.5V2.5H10" fill="none" stroke="#f6f6f6" stroke-width="1"/><rect x="10" y="2" width="1" height="1" fill="#5a5a5a"/><rect x="3" y="9" width="1" height="1" fill="#5a5a5a"/><rect x="5" y="5.5" width="7" height="7.5" fill="#ffffff"/><rect x="4" y="4" width="11" height="1.6" fill="#6e6e6e"/><rect x="4" y="5" width="1" height="9" fill="#7a7a7a"/><rect x="4" y="13" width="11" height="1" fill="#b8b8b8"/><rect x="12" y="5.5" width="1" height="8" fill="#9a9a9a"/><rect x="13" y="5.5" width="1" height="8" fill="#f2f2f2"/><rect x="14" y="5" width="1" height="8.5" fill="#9a9a9a"/><rect x="13" y="7" width="1" height="2" fill="#5a5a5a"/><path d="M6 7.9L8 9.4L6 10.9Z" fill="#8a8a8a" shape-rendering="auto"/><rect x="9" y="7" width="2" height="1" fill="#7e7e7e"/><rect x="9" y="9" width="2" height="1" fill="#7e7e7e"/><rect x="9" y="11" width="2" height="1" fill="#7e7e7e"/></svg>
<div style="left:282px;top:386px;width:27px;height:18px;background:#ffffff;border:1px solid #8f9db3;border-radius:2px;box-sizing:border-box"></div>
<div class="t" style="left:284.8px;top:390.86px;font-size:10.8px;color:#000000;transform-origin:0 0;">3</div>
<div style="left:309px;top:386px;width:120px;height:18px;background:#ffffff;border:1px solid #8f9db3;border-radius:2px;box-sizing:border-box"></div>
<div class="t" style="left:311.8px;top:390.86px;font-size:10.8px;color:#000000;transform-origin:0 0;">Materiallager</div>
<div style="left:430px;top:387px;width:17px;height:16px;background:#c6c6c6;border:1px solid #9eabbf;border-radius:2.5px;box-sizing:border-box"></div>
<svg style="position:absolute;left:430px;top:387px" width="17" height="16" viewBox="0 0 17 16" shape-rendering="crispEdges">
<path d="M2.5 9.5V2.5H10" fill="none" stroke="#f6f6f6" stroke-width="1"/><rect x="10" y="2" width="1" height="1" fill="#5a5a5a"/><rect x="3" y="9" width="1" height="1" fill="#5a5a5a"/><rect x="5" y="5.5" width="7" height="7.5" fill="#ffffff"/><rect x="4" y="4" width="11" height="1.6" fill="#6e6e6e"/><rect x="4" y="5" width="1" height="9" fill="#7a7a7a"/><rect x="4" y="13" width="11" height="1" fill="#b8b8b8"/><rect x="12" y="5.5" width="1" height="8" fill="#9a9a9a"/><rect x="13" y="5.5" width="1" height="8" fill="#f2f2f2"/><rect x="14" y="5" width="1" height="8.5" fill="#9a9a9a"/><rect x="13" y="7" width="1" height="2" fill="#5a5a5a"/><path d="M6 7.9L8 9.4L6 10.9Z" fill="#8a8a8a" shape-rendering="auto"/><rect x="9" y="7" width="2" height="1" fill="#7e7e7e"/><rect x="9" y="9" width="2" height="1" fill="#7e7e7e"/><rect x="9" y="11" width="2" height="1" fill="#7e7e7e"/></svg>
<div style="left:448px;top:386px;width:26px;height:18px;background:#ffffff;border:1px solid #8f9db3;border-radius:2px;box-sizing:border-box"></div>
<div class="t" style="left:450.8px;top:390.86px;font-size:10.8px;color:#000000;transform-origin:0 0;">888</div>
<div style="left:474px;top:386px;width:120px;height:18px;background:#ffffff;border:1px solid #8f9db3;border-radius:2px;box-sizing:border-box"></div>
<div class="t" style="left:476.8px;top:390.86px;font-size:10.8px;color:#000000;letter-spacing:-0.2px;transform-origin:0 0;">Sammellager</div>
<div style="left:595px;top:387px;width:17px;height:16px;background:#c6c6c6;border:1px solid #9eabbf;border-radius:2.5px;box-sizing:border-box"></div>
<svg style="position:absolute;left:595px;top:387px" width="17" height="16" viewBox="0 0 17 16" shape-rendering="crispEdges">
<path d="M2.5 9.5V2.5H10" fill="none" stroke="#f6f6f6" stroke-width="1"/><rect x="10" y="2" width="1" height="1" fill="#5a5a5a"/><rect x="3" y="9" width="1" height="1" fill="#5a5a5a"/><rect x="5" y="5.5" width="7" height="7.5" fill="#ffffff"/><rect x="4" y="4" width="11" height="1.6" fill="#6e6e6e"/><rect x="4" y="5" width="1" height="9" fill="#7a7a7a"/><rect x="4" y="13" width="11" height="1" fill="#b8b8b8"/><rect x="12" y="5.5" width="1" height="8" fill="#9a9a9a"/><rect x="13" y="5.5" width="1" height="8" fill="#f2f2f2"/><rect x="14" y="5" width="1" height="8.5" fill="#9a9a9a"/><rect x="13" y="7" width="1" height="2" fill="#5a5a5a"/><path d="M6 7.9L8 9.4L6 10.9Z" fill="#8a8a8a" shape-rendering="auto"/><rect x="9" y="7" width="2" height="1" fill="#7e7e7e"/><rect x="9" y="9" width="2" height="1" fill="#7e7e7e"/><rect x="9" y="11" width="2" height="1" fill="#7e7e7e"/></svg>
<div style="left:613px;top:386px;width:27px;height:18px;background:#ebebeb;border:1px solid #8f9db3;border-radius:2px;box-sizing:border-box"></div>
<div class="t" style="left:615.8px;top:390.86px;font-size:10.8px;color:#000000;transform-origin:0 0;">50</div>
<div style="left:640px;top:386px;width:80px;height:18px;background:#ebebeb;border:1px solid #8f9db3;border-radius:2px;box-sizing:border-box"></div>
<div class="t" style="left:642.8px;top:390.86px;font-size:10.8px;color:#000000;transform:scaleX(0.9);transform-origin:0 0;">POLST</div>
<div style="left:721px;top:387px;width:17px;height:16px;background:#c6c6c6;border:1px solid #9eabbf;border-radius:2.5px;box-sizing:border-box"></div>
<svg style="position:absolute;left:721px;top:387px" width="17" height="16" viewBox="0 0 17 16" shape-rendering="crispEdges">
<path d="M2.5 9.5V2.5H10" fill="none" stroke="#f6f6f6" stroke-width="1"/><rect x="10" y="2" width="1" height="1" fill="#5a5a5a"/><rect x="3" y="9" width="1" height="1" fill="#5a5a5a"/><rect x="5" y="5.5" width="7" height="7.5" fill="#ffffff"/><rect x="4" y="4" width="11" height="1.6" fill="#6e6e6e"/><rect x="4" y="5" width="1" height="9" fill="#7a7a7a"/><rect x="4" y="13" width="11" height="1" fill="#b8b8b8"/><rect x="12" y="5.5" width="1" height="8" fill="#9a9a9a"/><rect x="13" y="5.5" width="1" height="8" fill="#f2f2f2"/><rect x="14" y="5" width="1" height="8.5" fill="#9a9a9a"/><rect x="13" y="7" width="1" height="2" fill="#5a5a5a"/><path d="M6 7.9L8 9.4L6 10.9Z" fill="#8a8a8a" shape-rendering="auto"/><rect x="9" y="7" width="2" height="1" fill="#7e7e7e"/><rect x="9" y="9" width="2" height="1" fill="#7e7e7e"/><rect x="9" y="11" width="2" height="1" fill="#7e7e7e"/></svg>
<div style="left:738px;top:386px;width:27px;height:18px;background:#ffffff;border:1px solid #8f9db3;border-radius:2px;box-sizing:border-box"></div>
<div class="t" style="right:232px;top:390.86px;font-size:10.8px;color:#000000;transform-origin:100% 0;">1</div>
<div style="left:792px;top:389px;width:12px;height:12px;background:#ffffff;border:1px solid #5b6f8e;box-sizing:border-box"></div>
<div style="left:826px;top:387px;width:89px;height:16px;background:#c0c0c0;border:1px solid #93a1b6;border-radius:2.5px;box-sizing:border-box;box-shadow:inset 1px 1px 0 #d2d2d2"></div>
<div style="left:826px;top:387px;width:89px;height:14px;overflow:hidden"><div class="t" style="left:0;width:89px;text-align:center;top:3.86px;font-size:10.8px;color:#000000;letter-spacing:0.26px;">Bedarfsprüfung</div></div>
<div style="left:18px;top:404px;width:34px;height:19px;background:#ebebeb;border:1px solid #8f9db3;border-radius:2px;box-sizing:border-box"></div>
<div class="t" style="left:20.8px;top:408.86px;font-size:10.8px;color:#000000;transform-origin:0 0;">40</div>
<div style="left:52px;top:404px;width:80px;height:19px;background:#ebebeb;border:1px solid #8f9db3;border-radius:2px;box-sizing:border-box"></div>
<div class="t" style="left:54.8px;top:408.86px;font-size:10.8px;color:#000000;transform:scaleX(0.9);transform-origin:0 0;">WPOLS</div>
<div style="left:133px;top:405px;width:17px;height:16px;background:#c6c6c6;border:1px solid #9eabbf;border-radius:2.5px;box-sizing:border-box"></div>
<svg style="position:absolute;left:133px;top:405px" width="17" height="16" viewBox="0 0 17 16" shape-rendering="crispEdges">
<path d="M2.5 9.5V2.5H10" fill="none" stroke="#f6f6f6" stroke-width="1"/><rect x="10" y="2" width="1" height="1" fill="#5a5a5a"/><rect x="3" y="9" width="1" height="1" fill="#5a5a5a"/><rect x="5" y="5.5" width="7" height="7.5" fill="#ffffff"/><rect x="4" y="4" width="11" height="1.6" fill="#6e6e6e"/><rect x="4" y="5" width="1" height="9" fill="#7a7a7a"/><rect x="4" y="13" width="11" height="1" fill="#b8b8b8"/><rect x="12" y="5.5" width="1" height="8" fill="#9a9a9a"/><rect x="13" y="5.5" width="1" height="8" fill="#f2f2f2"/><rect x="14" y="5" width="1" height="8.5" fill="#9a9a9a"/><rect x="13" y="7" width="1" height="2" fill="#5a5a5a"/><path d="M6 7.9L8 9.4L6 10.9Z" fill="#8a8a8a" shape-rendering="auto"/><rect x="9" y="7" width="2" height="1" fill="#7e7e7e"/><rect x="9" y="9" width="2" height="1" fill="#7e7e7e"/><rect x="9" y="11" width="2" height="1" fill="#7e7e7e"/></svg>
<div style="left:150px;top:404px;width:34px;height:19px;background:#ebebeb;border:1px solid #8f9db3;border-radius:2px;box-sizing:border-box"></div>
<div class="t" style="left:152.8px;top:408.86px;font-size:10.8px;color:#000000;transform-origin:0 0;">10</div>
<div style="left:184px;top:404px;width:80px;height:19px;background:#ebebeb;border:1px solid #8f9db3;border-radius:2px;box-sizing:border-box"></div>
<div class="t" style="left:186.8px;top:408.86px;font-size:10.8px;color:#000000;letter-spacing:-0.1px;transform-origin:0 0;">Ungarn 1</div>
<div style="left:265px;top:405px;width:17px;height:16px;background:#c6c6c6;border:1px solid #9eabbf;border-radius:2.5px;box-sizing:border-box"></div>
<svg style="position:absolute;left:265px;top:405px" width="17" height="16" viewBox="0 0 17 16" shape-rendering="crispEdges">
<path d="M2.5 9.5V2.5H10" fill="none" stroke="#f6f6f6" stroke-width="1"/><rect x="10" y="2" width="1" height="1" fill="#5a5a5a"/><rect x="3" y="9" width="1" height="1" fill="#5a5a5a"/><rect x="5" y="5.5" width="7" height="7.5" fill="#ffffff"/><rect x="4" y="4" width="11" height="1.6" fill="#6e6e6e"/><rect x="4" y="5" width="1" height="9" fill="#7a7a7a"/><rect x="4" y="13" width="11" height="1" fill="#b8b8b8"/><rect x="12" y="5.5" width="1" height="8" fill="#9a9a9a"/><rect x="13" y="5.5" width="1" height="8" fill="#f2f2f2"/><rect x="14" y="5" width="1" height="8.5" fill="#9a9a9a"/><rect x="13" y="7" width="1" height="2" fill="#5a5a5a"/><path d="M6 7.9L8 9.4L6 10.9Z" fill="#8a8a8a" shape-rendering="auto"/><rect x="9" y="7" width="2" height="1" fill="#7e7e7e"/><rect x="9" y="9" width="2" height="1" fill="#7e7e7e"/><rect x="9" y="11" width="2" height="1" fill="#7e7e7e"/></svg>
<div style="left:282px;top:404px;width:27px;height:19px;background:#ffffff;border:1px solid #8f9db3;border-radius:2px;box-sizing:border-box"></div>
<div class="t" style="left:284.8px;top:408.86px;font-size:10.8px;color:#000000;transform-origin:0 0;">3</div>
<div style="left:309px;top:404px;width:120px;height:19px;background:#ffffff;border:1px solid #8f9db3;border-radius:2px;box-sizing:border-box"></div>
<div class="t" style="left:311.8px;top:408.86px;font-size:10.8px;color:#000000;transform-origin:0 0;">Materiallager</div>
<div style="left:430px;top:405px;width:17px;height:16px;background:#c6c6c6;border:1px solid #9eabbf;border-radius:2.5px;box-sizing:border-box"></div>
<svg style="position:absolute;left:430px;top:405px" width="17" height="16" viewBox="0 0 17 16" shape-rendering="crispEdges">
<path d="M2.5 9.5V2.5H10" fill="none" stroke="#f6f6f6" stroke-width="1"/><rect x="10" y="2" width="1" height="1" fill="#5a5a5a"/><rect x="3" y="9" width="1" height="1" fill="#5a5a5a"/><rect x="5" y="5.5" width="7" height="7.5" fill="#ffffff"/><rect x="4" y="4" width="11" height="1.6" fill="#6e6e6e"/><rect x="4" y="5" width="1" height="9" fill="#7a7a7a"/><rect x="4" y="13" width="11" height="1" fill="#b8b8b8"/><rect x="12" y="5.5" width="1" height="8" fill="#9a9a9a"/><rect x="13" y="5.5" width="1" height="8" fill="#f2f2f2"/><rect x="14" y="5" width="1" height="8.5" fill="#9a9a9a"/><rect x="13" y="7" width="1" height="2" fill="#5a5a5a"/><path d="M6 7.9L8 9.4L6 10.9Z" fill="#8a8a8a" shape-rendering="auto"/><rect x="9" y="7" width="2" height="1" fill="#7e7e7e"/><rect x="9" y="9" width="2" height="1" fill="#7e7e7e"/><rect x="9" y="11" width="2" height="1" fill="#7e7e7e"/></svg>
<div style="left:448px;top:404px;width:26px;height:19px;background:#ffffff;border:1px solid #8f9db3;border-radius:2px;box-sizing:border-box"></div>
<div class="t" style="left:450.8px;top:408.86px;font-size:10.8px;color:#000000;transform-origin:0 0;">888</div>
<div style="left:474px;top:404px;width:120px;height:19px;background:#ffffff;border:1px solid #8f9db3;border-radius:2px;box-sizing:border-box"></div>
<div class="t" style="left:476.8px;top:408.86px;font-size:10.8px;color:#000000;letter-spacing:-0.2px;transform-origin:0 0;">Sammellager</div>
<div style="left:595px;top:405px;width:17px;height:16px;background:#c6c6c6;border:1px solid #9eabbf;border-radius:2.5px;box-sizing:border-box"></div>
<svg style="position:absolute;left:595px;top:405px" width="17" height="16" viewBox="0 0 17 16" shape-rendering="crispEdges">
<path d="M2.5 9.5V2.5H10" fill="none" stroke="#f6f6f6" stroke-width="1"/><rect x="10" y="2" width="1" height="1" fill="#5a5a5a"/><rect x="3" y="9" width="1" height="1" fill="#5a5a5a"/><rect x="5" y="5.5" width="7" height="7.5" fill="#ffffff"/><rect x="4" y="4" width="11" height="1.6" fill="#6e6e6e"/><rect x="4" y="5" width="1" height="9" fill="#7a7a7a"/><rect x="4" y="13" width="11" height="1" fill="#b8b8b8"/><rect x="12" y="5.5" width="1" height="8" fill="#9a9a9a"/><rect x="13" y="5.5" width="1" height="8" fill="#f2f2f2"/><rect x="14" y="5" width="1" height="8.5" fill="#9a9a9a"/><rect x="13" y="7" width="1" height="2" fill="#5a5a5a"/><path d="M6 7.9L8 9.4L6 10.9Z" fill="#8a8a8a" shape-rendering="auto"/><rect x="9" y="7" width="2" height="1" fill="#7e7e7e"/><rect x="9" y="9" width="2" height="1" fill="#7e7e7e"/><rect x="9" y="11" width="2" height="1" fill="#7e7e7e"/></svg>
<div style="left:613px;top:404px;width:27px;height:19px;background:#ebebeb;border:1px solid #8f9db3;border-radius:2px;box-sizing:border-box"></div>
<div class="t" style="left:615.8px;top:408.86px;font-size:10.8px;color:#000000;transform-origin:0 0;">50</div>
<div style="left:640px;top:404px;width:80px;height:19px;background:#ebebeb;border:1px solid #8f9db3;border-radius:2px;box-sizing:border-box"></div>
<div class="t" style="left:642.8px;top:408.86px;font-size:10.8px;color:#000000;transform:scaleX(0.9);transform-origin:0 0;">POLST</div>
<div style="left:721px;top:405px;width:17px;height:16px;background:#c6c6c6;border:1px solid #9eabbf;border-radius:2.5px;box-sizing:border-box"></div>
<svg style="position:absolute;left:721px;top:405px" width="17" height="16" viewBox="0 0 17 16" shape-rendering="crispEdges">
<path d="M2.5 9.5V2.5H10" fill="none" stroke="#f6f6f6" stroke-width="1"/><rect x="10" y="2" width="1" height="1" fill="#5a5a5a"/><rect x="3" y="9" width="1" height="1" fill="#5a5a5a"/><rect x="5" y="5.5" width="7" height="7.5" fill="#ffffff"/><rect x="4" y="4" width="11" height="1.6" fill="#6e6e6e"/><rect x="4" y="5" width="1" height="9" fill="#7a7a7a"/><rect x="4" y="13" width="11" height="1" fill="#b8b8b8"/><rect x="12" y="5.5" width="1" height="8" fill="#9a9a9a"/><rect x="13" y="5.5" width="1" height="8" fill="#f2f2f2"/><rect x="14" y="5" width="1" height="8.5" fill="#9a9a9a"/><rect x="13" y="7" width="1" height="2" fill="#5a5a5a"/><path d="M6 7.9L8 9.4L6 10.9Z" fill="#8a8a8a" shape-rendering="auto"/><rect x="9" y="7" width="2" height="1" fill="#7e7e7e"/><rect x="9" y="9" width="2" height="1" fill="#7e7e7e"/><rect x="9" y="11" width="2" height="1" fill="#7e7e7e"/></svg>
<div style="left:738px;top:404px;width:27px;height:19px;background:#ffffff;border:1px solid #8f9db3;border-radius:2px;box-sizing:border-box"></div>
<div class="t" style="right:232px;top:408.86px;font-size:10.8px;color:#000000;transform-origin:100% 0;">1</div>
<div style="left:792px;top:407px;width:12px;height:12px;background:#ffffff;border:1px solid #5b6f8e;box-sizing:border-box"></div>
<div style="left:826px;top:405px;width:89px;height:16px;background:#c0c0c0;border:1px solid #93a1b6;border-radius:2.5px;box-sizing:border-box;box-shadow:inset 1px 1px 0 #d2d2d2"></div>
<div style="left:826px;top:405px;width:89px;height:14px;overflow:hidden"><div class="t" style="left:0;width:89px;text-align:center;top:3.86px;font-size:10.8px;color:#000000;letter-spacing:0.26px;">Bedarfsprüfung</div></div>
<div style="left:18px;top:423px;width:34px;height:19px;background:#ebebeb;border:1px solid #8f9db3;border-radius:2px;box-sizing:border-box"></div>
<div class="t" style="left:20.8px;top:427.86px;font-size:10.8px;color:#000000;transform-origin:0 0;">50</div>
<div style="left:52px;top:423px;width:80px;height:19px;background:#ebebeb;border:1px solid #8f9db3;border-radius:2px;box-sizing:border-box"></div>
<div class="t" style="left:54.8px;top:427.86px;font-size:10.8px;color:#000000;transform:scaleX(0.9);transform-origin:0 0;">POLST</div>
<div style="left:133px;top:424px;width:17px;height:16px;background:#c6c6c6;border:1px solid #9eabbf;border-radius:2.5px;box-sizing:border-box"></div>
<svg style="position:absolute;left:133px;top:424px" width="17" height="16" viewBox="0 0 17 16" shape-rendering="crispEdges">
<path d="M2.5 9.5V2.5H10" fill="none" stroke="#f6f6f6" stroke-width="1"/><rect x="10" y="2" width="1" height="1" fill="#5a5a5a"/><rect x="3" y="9" width="1" height="1" fill="#5a5a5a"/><rect x="5" y="5.5" width="7" height="7.5" fill="#ffffff"/><rect x="4" y="4" width="11" height="1.6" fill="#6e6e6e"/><rect x="4" y="5" width="1" height="9" fill="#7a7a7a"/><rect x="4" y="13" width="11" height="1" fill="#b8b8b8"/><rect x="12" y="5.5" width="1" height="8" fill="#9a9a9a"/><rect x="13" y="5.5" width="1" height="8" fill="#f2f2f2"/><rect x="14" y="5" width="1" height="8.5" fill="#9a9a9a"/><rect x="13" y="7" width="1" height="2" fill="#5a5a5a"/><path d="M6 7.9L8 9.4L6 10.9Z" fill="#8a8a8a" shape-rendering="auto"/><rect x="9" y="7" width="2" height="1" fill="#7e7e7e"/><rect x="9" y="9" width="2" height="1" fill="#7e7e7e"/><rect x="9" y="11" width="2" height="1" fill="#7e7e7e"/></svg>
<div style="left:150px;top:423px;width:34px;height:19px;background:#ebebeb;border:1px solid #8f9db3;border-radius:2px;box-sizing:border-box"></div>
<div class="t" style="left:152.8px;top:427.86px;font-size:10.8px;color:#000000;transform-origin:0 0;">10</div>
<div style="left:184px;top:423px;width:80px;height:19px;background:#ebebeb;border:1px solid #8f9db3;border-radius:2px;box-sizing:border-box"></div>
<div class="t" style="left:186.8px;top:427.86px;font-size:10.8px;color:#000000;letter-spacing:-0.1px;transform-origin:0 0;">Ungarn 1</div>
<div style="left:265px;top:424px;width:17px;height:16px;background:#c6c6c6;border:1px solid #9eabbf;border-radius:2.5px;box-sizing:border-box"></div>
<svg style="position:absolute;left:265px;top:424px" width="17" height="16" viewBox="0 0 17 16" shape-rendering="crispEdges">
<path d="M2.5 9.5V2.5H10" fill="none" stroke="#f6f6f6" stroke-width="1"/><rect x="10" y="2" width="1" height="1" fill="#5a5a5a"/><rect x="3" y="9" width="1" height="1" fill="#5a5a5a"/><rect x="5" y="5.5" width="7" height="7.5" fill="#ffffff"/><rect x="4" y="4" width="11" height="1.6" fill="#6e6e6e"/><rect x="4" y="5" width="1" height="9" fill="#7a7a7a"/><rect x="4" y="13" width="11" height="1" fill="#b8b8b8"/><rect x="12" y="5.5" width="1" height="8" fill="#9a9a9a"/><rect x="13" y="5.5" width="1" height="8" fill="#f2f2f2"/><rect x="14" y="5" width="1" height="8.5" fill="#9a9a9a"/><rect x="13" y="7" width="1" height="2" fill="#5a5a5a"/><path d="M6 7.9L8 9.4L6 10.9Z" fill="#8a8a8a" shape-rendering="auto"/><rect x="9" y="7" width="2" height="1" fill="#7e7e7e"/><rect x="9" y="9" width="2" height="1" fill="#7e7e7e"/><rect x="9" y="11" width="2" height="1" fill="#7e7e7e"/></svg>
<div style="left:282px;top:423px;width:27px;height:19px;background:#ffffff;border:1px solid #8f9db3;border-radius:2px;box-sizing:border-box"></div>
<div class="t" style="left:284.8px;top:427.86px;font-size:10.8px;color:#000000;transform-origin:0 0;">3</div>
<div style="left:309px;top:423px;width:120px;height:19px;background:#ffffff;border:1px solid #8f9db3;border-radius:2px;box-sizing:border-box"></div>
<div class="t" style="left:311.8px;top:427.86px;font-size:10.8px;color:#000000;transform-origin:0 0;">Materiallager</div>
<div style="left:430px;top:424px;width:17px;height:16px;background:#c6c6c6;border:1px solid #9eabbf;border-radius:2.5px;box-sizing:border-box"></div>
<svg style="position:absolute;left:430px;top:424px" width="17" height="16" viewBox="0 0 17 16" shape-rendering="crispEdges">
<path d="M2.5 9.5V2.5H10" fill="none" stroke="#f6f6f6" stroke-width="1"/><rect x="10" y="2" width="1" height="1" fill="#5a5a5a"/><rect x="3" y="9" width="1" height="1" fill="#5a5a5a"/><rect x="5" y="5.5" width="7" height="7.5" fill="#ffffff"/><rect x="4" y="4" width="11" height="1.6" fill="#6e6e6e"/><rect x="4" y="5" width="1" height="9" fill="#7a7a7a"/><rect x="4" y="13" width="11" height="1" fill="#b8b8b8"/><rect x="12" y="5.5" width="1" height="8" fill="#9a9a9a"/><rect x="13" y="5.5" width="1" height="8" fill="#f2f2f2"/><rect x="14" y="5" width="1" height="8.5" fill="#9a9a9a"/><rect x="13" y="7" width="1" height="2" fill="#5a5a5a"/><path d="M6 7.9L8 9.4L6 10.9Z" fill="#8a8a8a" shape-rendering="auto"/><rect x="9" y="7" width="2" height="1" fill="#7e7e7e"/><rect x="9" y="9" width="2" height="1" fill="#7e7e7e"/><rect x="9" y="11" width="2" height="1" fill="#7e7e7e"/></svg>
<div style="left:448px;top:423px;width:26px;height:19px;background:#ffffff;border:1px solid #8f9db3;border-radius:2px;box-sizing:border-box"></div>
<div class="t" style="left:450.8px;top:427.86px;font-size:10.8px;color:#000000;transform-origin:0 0;">888</div>
<div style="left:474px;top:423px;width:120px;height:19px;background:#ffffff;border:1px solid #8f9db3;border-radius:2px;box-sizing:border-box"></div>
<div class="t" style="left:476.8px;top:427.86px;font-size:10.8px;color:#000000;letter-spacing:-0.2px;transform-origin:0 0;">Sammellager</div>
<div style="left:595px;top:424px;width:17px;height:16px;background:#c6c6c6;border:1px solid #9eabbf;border-radius:2.5px;box-sizing:border-box"></div>
<svg style="position:absolute;left:595px;top:424px" width="17" height="16" viewBox="0 0 17 16" shape-rendering="crispEdges">
<path d="M2.5 9.5V2.5H10" fill="none" stroke="#f6f6f6" stroke-width="1"/><rect x="10" y="2" width="1" height="1" fill="#5a5a5a"/><rect x="3" y="9" width="1" height="1" fill="#5a5a5a"/><rect x="5" y="5.5" width="7" height="7.5" fill="#ffffff"/><rect x="4" y="4" width="11" height="1.6" fill="#6e6e6e"/><rect x="4" y="5" width="1" height="9" fill="#7a7a7a"/><rect x="4" y="13" width="11" height="1" fill="#b8b8b8"/><rect x="12" y="5.5" width="1" height="8" fill="#9a9a9a"/><rect x="13" y="5.5" width="1" height="8" fill="#f2f2f2"/><rect x="14" y="5" width="1" height="8.5" fill="#9a9a9a"/><rect x="13" y="7" width="1" height="2" fill="#5a5a5a"/><path d="M6 7.9L8 9.4L6 10.9Z" fill="#8a8a8a" shape-rendering="auto"/><rect x="9" y="7" width="2" height="1" fill="#7e7e7e"/><rect x="9" y="9" width="2" height="1" fill="#7e7e7e"/><rect x="9" y="11" width="2" height="1" fill="#7e7e7e"/></svg>
<div style="left:613px;top:423px;width:27px;height:19px;background:#ebebeb;border:1px solid #8f9db3;border-radius:2px;box-sizing:border-box"></div>
<div class="t" style="left:615.8px;top:427.86px;font-size:10.8px;color:#000000;transform-origin:0 0;">90</div>
<div style="left:640px;top:423px;width:80px;height:19px;background:#ebebeb;border:1px solid #8f9db3;border-radius:2px;box-sizing:border-box"></div>
<div class="t" style="left:642.8px;top:427.86px;font-size:10.8px;color:#000000;transform:scaleX(0.9);transform-origin:0 0;">MONT</div>
<div style="left:721px;top:424px;width:17px;height:16px;background:#c6c6c6;border:1px solid #9eabbf;border-radius:2.5px;box-sizing:border-box"></div>
<svg style="position:absolute;left:721px;top:424px" width="17" height="16" viewBox="0 0 17 16" shape-rendering="crispEdges">
<path d="M2.5 9.5V2.5H10" fill="none" stroke="#f6f6f6" stroke-width="1"/><rect x="10" y="2" width="1" height="1" fill="#5a5a5a"/><rect x="3" y="9" width="1" height="1" fill="#5a5a5a"/><rect x="5" y="5.5" width="7" height="7.5" fill="#ffffff"/><rect x="4" y="4" width="11" height="1.6" fill="#6e6e6e"/><rect x="4" y="5" width="1" height="9" fill="#7a7a7a"/><rect x="4" y="13" width="11" height="1" fill="#b8b8b8"/><rect x="12" y="5.5" width="1" height="8" fill="#9a9a9a"/><rect x="13" y="5.5" width="1" height="8" fill="#f2f2f2"/><rect x="14" y="5" width="1" height="8.5" fill="#9a9a9a"/><rect x="13" y="7" width="1" height="2" fill="#5a5a5a"/><path d="M6 7.9L8 9.4L6 10.9Z" fill="#8a8a8a" shape-rendering="auto"/><rect x="9" y="7" width="2" height="1" fill="#7e7e7e"/><rect x="9" y="9" width="2" height="1" fill="#7e7e7e"/><rect x="9" y="11" width="2" height="1" fill="#7e7e7e"/></svg>
<div style="left:738px;top:423px;width:27px;height:19px;background:#ffffff;border:1px solid #8f9db3;border-radius:2px;box-sizing:border-box"></div>
<div class="t" style="right:232px;top:427.86px;font-size:10.8px;color:#000000;transform-origin:100% 0;">1</div>
<div style="left:792px;top:426px;width:12px;height:12px;background:#ffffff;border:1px solid #5b6f8e;box-sizing:border-box"></div>
<div style="left:826px;top:424px;width:89px;height:16px;background:#c0c0c0;border:1px solid #93a1b6;border-radius:2.5px;box-sizing:border-box;box-shadow:inset 1px 1px 0 #d2d2d2"></div>
<div style="left:826px;top:424px;width:89px;height:14px;overflow:hidden"><div class="t" style="left:0;width:89px;text-align:center;top:3.86px;font-size:10.8px;color:#000000;letter-spacing:0.26px;">Bedarfsprüfung</div></div>
<div style="left:18px;top:442px;width:34px;height:18px;background:#ebebeb;border:1px solid #8f9db3;border-radius:2px;box-sizing:border-box"></div>
<div class="t" style="left:20.8px;top:446.86px;font-size:10.8px;color:#000000;transform-origin:0 0;">90</div>
<div style="left:52px;top:442px;width:80px;height:18px;background:#ebebeb;border:1px solid #8f9db3;border-radius:2px;box-sizing:border-box"></div>
<div class="t" style="left:54.8px;top:446.86px;font-size:10.8px;color:#000000;transform:scaleX(0.9);transform-origin:0 0;">MONT</div>
<div style="left:133px;top:443px;width:17px;height:16px;background:#c6c6c6;border:1px solid #9eabbf;border-radius:2.5px;box-sizing:border-box"></div>
<svg style="position:absolute;left:133px;top:443px" width="17" height="16" viewBox="0 0 17 16" shape-rendering="crispEdges">
<path d="M2.5 9.5V2.5H10" fill="none" stroke="#f6f6f6" stroke-width="1"/><rect x="10" y="2" width="1" height="1" fill="#5a5a5a"/><rect x="3" y="9" width="1" height="1" fill="#5a5a5a"/><rect x="5" y="5.5" width="7" height="7.5" fill="#ffffff"/><rect x="4" y="4" width="11" height="1.6" fill="#6e6e6e"/><rect x="4" y="5" width="1" height="9" fill="#7a7a7a"/><rect x="4" y="13" width="11" height="1" fill="#b8b8b8"/><rect x="12" y="5.5" width="1" height="8" fill="#9a9a9a"/><rect x="13" y="5.5" width="1" height="8" fill="#f2f2f2"/><rect x="14" y="5" width="1" height="8.5" fill="#9a9a9a"/><rect x="13" y="7" width="1" height="2" fill="#5a5a5a"/><path d="M6 7.9L8 9.4L6 10.9Z" fill="#8a8a8a" shape-rendering="auto"/><rect x="9" y="7" width="2" height="1" fill="#7e7e7e"/><rect x="9" y="9" width="2" height="1" fill="#7e7e7e"/><rect x="9" y="11" width="2" height="1" fill="#7e7e7e"/></svg>
<div style="left:150px;top:442px;width:34px;height:18px;background:#ebebeb;border:1px solid #8f9db3;border-radius:2px;box-sizing:border-box"></div>
<div class="t" style="left:152.8px;top:446.86px;font-size:10.8px;color:#000000;transform-origin:0 0;">10</div>
<div style="left:184px;top:442px;width:80px;height:18px;background:#ebebeb;border:1px solid #8f9db3;border-radius:2px;box-sizing:border-box"></div>
<div class="t" style="left:186.8px;top:446.86px;font-size:10.8px;color:#000000;letter-spacing:-0.1px;transform-origin:0 0;">Ungarn 1</div>
<div style="left:265px;top:443px;width:17px;height:16px;background:#c6c6c6;border:1px solid #9eabbf;border-radius:2.5px;box-sizing:border-box"></div>
<svg style="position:absolute;left:265px;top:443px" width="17" height="16" viewBox="0 0 17 16" shape-rendering="crispEdges">
<path d="M2.5 9.5V2.5H10" fill="none" stroke="#f6f6f6" stroke-width="1"/><rect x="10" y="2" width="1" height="1" fill="#5a5a5a"/><rect x="3" y="9" width="1" height="1" fill="#5a5a5a"/><rect x="5" y="5.5" width="7" height="7.5" fill="#ffffff"/><rect x="4" y="4" width="11" height="1.6" fill="#6e6e6e"/><rect x="4" y="5" width="1" height="9" fill="#7a7a7a"/><rect x="4" y="13" width="11" height="1" fill="#b8b8b8"/><rect x="12" y="5.5" width="1" height="8" fill="#9a9a9a"/><rect x="13" y="5.5" width="1" height="8" fill="#f2f2f2"/><rect x="14" y="5" width="1" height="8.5" fill="#9a9a9a"/><rect x="13" y="7" width="1" height="2" fill="#5a5a5a"/><path d="M6 7.9L8 9.4L6 10.9Z" fill="#8a8a8a" shape-rendering="auto"/><rect x="9" y="7" width="2" height="1" fill="#7e7e7e"/><rect x="9" y="9" width="2" height="1" fill="#7e7e7e"/><rect x="9" y="11" width="2" height="1" fill="#7e7e7e"/></svg>
<div style="left:282px;top:442px;width:27px;height:18px;background:#ffffff;border:1px solid #8f9db3;border-radius:2px;box-sizing:border-box"></div>
<div class="t" style="left:284.8px;top:446.86px;font-size:10.8px;color:#000000;transform-origin:0 0;">3</div>
<div style="left:309px;top:442px;width:120px;height:18px;background:#ffffff;border:1px solid #8f9db3;border-radius:2px;box-sizing:border-box"></div>
<div class="t" style="left:311.8px;top:446.86px;font-size:10.8px;color:#000000;transform-origin:0 0;">Materiallager</div>
<div style="left:430px;top:443px;width:17px;height:16px;background:#c6c6c6;border:1px solid #9eabbf;border-radius:2.5px;box-sizing:border-box"></div>
<svg style="position:absolute;left:430px;top:443px" width="17" height="16" viewBox="0 0 17 16" shape-rendering="crispEdges">
<path d="M2.5 9.5V2.5H10" fill="none" stroke="#1f6aa8" stroke-width="1"/><rect x="10" y="2" width="1" height="1" fill="#000"/><rect x="3" y="9" width="1" height="1" fill="#000"/><rect x="5" y="5.5" width="7" height="7.5" fill="#ffffff"/><rect x="4" y="4" width="11" height="1.6" fill="#000000"/><rect x="4" y="5" width="1" height="9" fill="#000"/><rect x="4" y="13" width="11" height="1" fill="#1f6aa8"/><rect x="12" y="5.5" width="1" height="8" fill="#1f6aa8"/><rect x="13" y="5.5" width="1" height="8" fill="#ffffff"/><rect x="14" y="5" width="1" height="8.5" fill="#1f6aa8"/><rect x="13" y="7" width="1" height="2" fill="#000"/><path d="M6 7.9L8 9.4L6 10.9Z" fill="#1a2cff" shape-rendering="auto"/><rect x="9" y="7" width="2" height="1" fill="#ff1a1a"/><rect x="9" y="9" width="2" height="1" fill="#ff1a1a"/><rect x="9" y="11" width="2" height="1" fill="#ff1a1a"/></svg>
<div style="left:448px;top:442px;width:26px;height:18px;background:#ffffff;border:1px solid #8f9db3;border-radius:2px;box-sizing:border-box"></div>
<div class="t" style="left:450.8px;top:446.86px;font-size:10.8px;color:#000000;transform-origin:0 0;">888</div>
<div style="left:474px;top:442px;width:120px;height:18px;background:#ffffff;border:1px solid #8f9db3;border-radius:2px;box-sizing:border-box"></div>
<div class="t" style="left:476.8px;top:446.86px;font-size:10.8px;color:#000000;letter-spacing:-0.2px;transform-origin:0 0;">Sammellager</div>
<div style="left:595px;top:443px;width:17px;height:16px;background:#c6c6c6;border:1px solid #9eabbf;border-radius:2.5px;box-sizing:border-box"></div>
<svg style="position:absolute;left:595px;top:443px" width="17" height="16" viewBox="0 0 17 16" shape-rendering="crispEdges">
<path d="M2.5 9.5V2.5H10" fill="none" stroke="#1f6aa8" stroke-width="1"/><rect x="10" y="2" width="1" height="1" fill="#000"/><rect x="3" y="9" width="1" height="1" fill="#000"/><rect x="5" y="5.5" width="7" height="7.5" fill="#ffffff"/><rect x="4" y="4" width="11" height="1.6" fill="#000000"/><rect x="4" y="5" width="1" height="9" fill="#000"/><rect x="4" y="13" width="11" height="1" fill="#1f6aa8"/><rect x="12" y="5.5" width="1" height="8" fill="#1f6aa8"/><rect x="13" y="5.5" width="1" height="8" fill="#ffffff"/><rect x="14" y="5" width="1" height="8.5" fill="#1f6aa8"/><rect x="13" y="7" width="1" height="2" fill="#000"/><path d="M6 7.9L8 9.4L6 10.9Z" fill="#1a2cff" shape-rendering="auto"/><rect x="9" y="7" width="2" height="1" fill="#ff1a1a"/><rect x="9" y="9" width="2" height="1" fill="#ff1a1a"/><rect x="9" y="11" width="2" height="1" fill="#ff1a1a"/></svg>
<div style="left:613px;top:442px;width:27px;height:18px;background:#ebebeb;border:1px solid #8f9db3;border-radius:2px;box-sizing:border-box"></div>
<div class="t" style="left:615.8px;top:446.86px;font-size:10.8px;color:#000000;transform-origin:0 0;">60</div>
<div style="left:640px;top:442px;width:80px;height:18px;background:#ebebeb;border:1px solid #8f9db3;border-radius:2px;box-sizing:border-box"></div>
<div class="t" style="left:642.8px;top:446.86px;font-size:10.8px;color:#000000;letter-spacing:0.26px;transform:scaleX(0.9);transform-origin:0 0;">ENDKTR</div>
<div style="left:721px;top:443px;width:17px;height:16px;background:#c6c6c6;border:1px solid #9eabbf;border-radius:2.5px;box-sizing:border-box"></div>
<svg style="position:absolute;left:721px;top:443px" width="17" height="16" viewBox="0 0 17 16" shape-rendering="crispEdges">
<path d="M2.5 9.5V2.5H10" fill="none" stroke="#f6f6f6" stroke-width="1"/><rect x="10" y="2" width="1" height="1" fill="#5a5a5a"/><rect x="3" y="9" width="1" height="1" fill="#5a5a5a"/><rect x="5" y="5.5" width="7" height="7.5" fill="#ffffff"/><rect x="4" y="4" width="11" height="1.6" fill="#6e6e6e"/><rect x="4" y="5" width="1" height="9" fill="#7a7a7a"/><rect x="4" y="13" width="11" height="1" fill="#b8b8b8"/><rect x="12" y="5.5" width="1" height="8" fill="#9a9a9a"/><rect x="13" y="5.5" width="1" height="8" fill="#f2f2f2"/><rect x="14" y="5" width="1" height="8.5" fill="#9a9a9a"/><rect x="13" y="7" width="1" height="2" fill="#5a5a5a"/><path d="M6 7.9L8 9.4L6 10.9Z" fill="#8a8a8a" shape-rendering="auto"/><rect x="9" y="7" width="2" height="1" fill="#7e7e7e"/><rect x="9" y="9" width="2" height="1" fill="#7e7e7e"/><rect x="9" y="11" width="2" height="1" fill="#7e7e7e"/></svg>
<div style="left:738px;top:442px;width:27px;height:18px;background:#ffffff;border:1px solid #8f9db3;border-radius:2px;box-sizing:border-box"></div>
<div class="t" style="right:232px;top:446.86px;font-size:10.8px;color:#000000;transform-origin:100% 0;">0</div>
<div style="left:792px;top:445px;width:12px;height:12px;background:#ffffff;border:1px solid #5b6f8e;box-sizing:border-box"></div>
<div style="left:826px;top:443px;width:89px;height:16px;background:#c0c0c0;border:1px solid #93a1b6;border-radius:2.5px;box-sizing:border-box;box-shadow:inset 1px 1px 0 #d2d2d2"></div>
<div style="left:826px;top:443px;width:89px;height:14px;overflow:hidden"><div class="t" style="left:0;width:89px;text-align:center;top:3.86px;font-size:10.8px;color:#000000;letter-spacing:0.26px;">Bedarfsprüfung</div></div>
<div style="left:18px;top:460px;width:34px;height:19px;background:#ebebeb;border:1px solid #8f9db3;border-radius:2px;box-sizing:border-box"></div>
<div class="t" style="left:20.8px;top:464.86px;font-size:10.8px;color:#000000;transform-origin:0 0;">60</div>
<div style="left:52px;top:460px;width:80px;height:19px;background:#ebebeb;border:1px solid #8f9db3;border-radius:2px;box-sizing:border-box"></div>
<div class="t" style="left:54.8px;top:464.86px;font-size:10.8px;color:#000000;letter-spacing:0.26px;transform:scaleX(0.9);transform-origin:0 0;">ENDKTR</div>
<div style="left:133px;top:461px;width:17px;height:16px;background:#c6c6c6;border:1px solid #9eabbf;border-radius:2.5px;box-sizing:border-box"></div>
<svg style="position:absolute;left:133px;top:461px" width="17" height="16" viewBox="0 0 17 16" shape-rendering="crispEdges">
<path d="M2.5 9.5V2.5H10" fill="none" stroke="#f6f6f6" stroke-width="1"/><rect x="10" y="2" width="1" height="1" fill="#5a5a5a"/><rect x="3" y="9" width="1" height="1" fill="#5a5a5a"/><rect x="5" y="5.5" width="7" height="7.5" fill="#ffffff"/><rect x="4" y="4" width="11" height="1.6" fill="#6e6e6e"/><rect x="4" y="5" width="1" height="9" fill="#7a7a7a"/><rect x="4" y="13" width="11" height="1" fill="#b8b8b8"/><rect x="12" y="5.5" width="1" height="8" fill="#9a9a9a"/><rect x="13" y="5.5" width="1" height="8" fill="#f2f2f2"/><rect x="14" y="5" width="1" height="8.5" fill="#9a9a9a"/><rect x="13" y="7" width="1" height="2" fill="#5a5a5a"/><path d="M6 7.9L8 9.4L6 10.9Z" fill="#8a8a8a" shape-rendering="auto"/><rect x="9" y="7" width="2" height="1" fill="#7e7e7e"/><rect x="9" y="9" width="2" height="1" fill="#7e7e7e"/><rect x="9" y="11" width="2" height="1" fill="#7e7e7e"/></svg>
<div style="left:150px;top:460px;width:34px;height:19px;background:#ebebeb;border:1px solid #8f9db3;border-radius:2px;box-sizing:border-box"></div>
<div class="t" style="left:152.8px;top:464.86px;font-size:10.8px;color:#000000;transform-origin:0 0;">10</div>
<div style="left:184px;top:460px;width:80px;height:19px;background:#ebebeb;border:1px solid #8f9db3;border-radius:2px;box-sizing:border-box"></div>
<div class="t" style="left:186.8px;top:464.86px;font-size:10.8px;color:#000000;letter-spacing:-0.1px;transform-origin:0 0;">Ungarn 1</div>
<div style="left:265px;top:461px;width:17px;height:16px;background:#c6c6c6;border:1px solid #9eabbf;border-radius:2.5px;box-sizing:border-box"></div>
<svg style="position:absolute;left:265px;top:461px" width="17" height="16" viewBox="0 0 17 16" shape-rendering="crispEdges">
<path d="M2.5 9.5V2.5H10" fill="none" stroke="#f6f6f6" stroke-width="1"/><rect x="10" y="2" width="1" height="1" fill="#5a5a5a"/><rect x="3" y="9" width="1" height="1" fill="#5a5a5a"/><rect x="5" y="5.5" width="7" height="7.5" fill="#ffffff"/><rect x="4" y="4" width="11" height="1.6" fill="#6e6e6e"/><rect x="4" y="5" width="1" height="9" fill="#7a7a7a"/><rect x="4" y="13" width="11" height="1" fill="#b8b8b8"/><rect x="12" y="5.5" width="1" height="8" fill="#9a9a9a"/><rect x="13" y="5.5" width="1" height="8" fill="#f2f2f2"/><rect x="14" y="5" width="1" height="8.5" fill="#9a9a9a"/><rect x="13" y="7" width="1" height="2" fill="#5a5a5a"/><path d="M6 7.9L8 9.4L6 10.9Z" fill="#8a8a8a" shape-rendering="auto"/><rect x="9" y="7" width="2" height="1" fill="#7e7e7e"/><rect x="9" y="9" width="2" height="1" fill="#7e7e7e"/><rect x="9" y="11" width="2" height="1" fill="#7e7e7e"/></svg>
<div style="left:282px;top:460px;width:27px;height:19px;background:#ffffff;border:1px solid #8f9db3;border-radius:2px;box-sizing:border-box"></div>
<div class="t" style="left:284.8px;top:464.86px;font-size:10.8px;color:#000000;transform-origin:0 0;">3</div>
<div style="left:309px;top:460px;width:120px;height:19px;background:#ffffff;border:1px solid #8f9db3;border-radius:2px;box-sizing:border-box"></div>
<div class="t" style="left:311.8px;top:464.86px;font-size:10.8px;color:#000000;transform-origin:0 0;">Materiallager</div>
<div style="left:430px;top:461px;width:17px;height:16px;background:#c6c6c6;border:1px solid #9eabbf;border-radius:2.5px;box-sizing:border-box"></div>
<svg style="position:absolute;left:430px;top:461px" width="17" height="16" viewBox="0 0 17 16" shape-rendering="crispEdges">
<path d="M2.5 9.5V2.5H10" fill="none" stroke="#1f6aa8" stroke-width="1"/><rect x="10" y="2" width="1" height="1" fill="#000"/><rect x="3" y="9" width="1" height="1" fill="#000"/><rect x="5" y="5.5" width="7" height="7.5" fill="#ffffff"/><rect x="4" y="4" width="11" height="1.6" fill="#000000"/><rect x="4" y="5" width="1" height="9" fill="#000"/><rect x="4" y="13" width="11" height="1" fill="#1f6aa8"/><rect x="12" y="5.5" width="1" height="8" fill="#1f6aa8"/><rect x="13" y="5.5" width="1" height="8" fill="#ffffff"/><rect x="14" y="5" width="1" height="8.5" fill="#1f6aa8"/><rect x="13" y="7" width="1" height="2" fill="#000"/><path d="M6 7.9L8 9.4L6 10.9Z" fill="#1a2cff" shape-rendering="auto"/><rect x="9" y="7" width="2" height="1" fill="#ff1a1a"/><rect x="9" y="9" width="2" height="1" fill="#ff1a1a"/><rect x="9" y="11" width="2" height="1" fill="#ff1a1a"/></svg>
<div style="left:448px;top:460px;width:26px;height:19px;background:#ffffff;border:1px solid #8f9db3;border-radius:2px;box-sizing:border-box"></div>
<div class="t" style="left:450.8px;top:464.86px;font-size:10.8px;color:#000000;transform-origin:0 0;">888</div>
<div style="left:474px;top:460px;width:120px;height:19px;background:#ffffff;border:1px solid #8f9db3;border-radius:2px;box-sizing:border-box"></div>
<div class="t" style="left:476.8px;top:464.86px;font-size:10.8px;color:#000000;letter-spacing:-0.2px;transform-origin:0 0;">Sammellager</div>
<div style="left:595px;top:461px;width:17px;height:16px;background:#c6c6c6;border:1px solid #9eabbf;border-radius:2.5px;box-sizing:border-box"></div>
<svg style="position:absolute;left:595px;top:461px" width="17" height="16" viewBox="0 0 17 16" shape-rendering="crispEdges">
<path d="M2.5 9.5V2.5H10" fill="none" stroke="#1f6aa8" stroke-width="1"/><rect x="10" y="2" width="1" height="1" fill="#000"/><rect x="3" y="9" width="1" height="1" fill="#000"/><rect x="5" y="5.5" width="7" height="7.5" fill="#ffffff"/><rect x="4" y="4" width="11" height="1.6" fill="#000000"/><rect x="4" y="5" width="1" height="9" fill="#000"/><rect x="4" y="13" width="11" height="1" fill="#1f6aa8"/><rect x="12" y="5.5" width="1" height="8" fill="#1f6aa8"/><rect x="13" y="5.5" width="1" height="8" fill="#ffffff"/><rect x="14" y="5" width="1" height="8.5" fill="#1f6aa8"/><rect x="13" y="7" width="1" height="2" fill="#000"/><path d="M6 7.9L8 9.4L6 10.9Z" fill="#1a2cff" shape-rendering="auto"/><rect x="9" y="7" width="2" height="1" fill="#ff1a1a"/><rect x="9" y="9" width="2" height="1" fill="#ff1a1a"/><rect x="9" y="11" width="2" height="1" fill="#ff1a1a"/></svg>
<div style="left:613px;top:460px;width:27px;height:19px;background:#ebebeb;border:1px solid #8f9db3;border-radius:2px;box-sizing:border-box"></div>
<div class="t" style="left:615.8px;top:464.86px;font-size:10.8px;color:#000000;transform-origin:0 0;">103</div>
<div style="left:640px;top:460px;width:80px;height:19px;background:#ebebeb;border:1px solid #8f9db3;border-radius:2px;box-sizing:border-box"></div>
<div class="t" style="left:642.8px;top:464.86px;font-size:10.8px;color:#000000;transform:scaleX(0.9);transform-origin:0 0;">VPK</div>
<div style="left:721px;top:461px;width:17px;height:16px;background:#c6c6c6;border:1px solid #9eabbf;border-radius:2.5px;box-sizing:border-box"></div>
<svg style="position:absolute;left:721px;top:461px" width="17" height="16" viewBox="0 0 17 16" shape-rendering="crispEdges">
<path d="M2.5 9.5V2.5H10" fill="none" stroke="#f6f6f6" stroke-width="1"/><rect x="10" y="2" width="1" height="1" fill="#5a5a5a"/><rect x="3" y="9" width="1" height="1" fill="#5a5a5a"/><rect x="5" y="5.5" width="7" height="7.5" fill="#ffffff"/><rect x="4" y="4" width="11" height="1.6" fill="#6e6e6e"/><rect x="4" y="5" width="1" height="9" fill="#7a7a7a"/><rect x="4" y="13" width="11" height="1" fill="#b8b8b8"/><rect x="12" y="5.5" width="1" height="8" fill="#9a9a9a"/><rect x="13" y="5.5" width="1" height="8" fill="#f2f2f2"/><rect x="14" y="5" width="1" height="8.5" fill="#9a9a9a"/><rect x="13" y="7" width="1" height="2" fill="#5a5a5a"/><path d="M6 7.9L8 9.4L6 10.9Z" fill="#8a8a8a" shape-rendering="auto"/><rect x="9" y="7" width="2" height="1" fill="#7e7e7e"/><rect x="9" y="9" width="2" height="1" fill="#7e7e7e"/><rect x="9" y="11" width="2" height="1" fill="#7e7e7e"/></svg>
<div style="left:738px;top:460px;width:27px;height:19px;background:#ffffff;border:1px solid #8f9db3;border-radius:2px;box-sizing:border-box"></div>
<div class="t" style="right:232px;top:464.86px;font-size:10.8px;color:#000000;transform-origin:100% 0;">0</div>
<div style="left:792px;top:463px;width:12px;height:12px;background:#ffffff;border:1px solid #5b6f8e;box-sizing:border-box"></div>
<div style="left:826px;top:461px;width:89px;height:16px;background:#c0c0c0;border:1px solid #93a1b6;border-radius:2.5px;box-sizing:border-box;box-shadow:inset 1px 1px 0 #d2d2d2"></div>
<div style="left:826px;top:461px;width:89px;height:14px;overflow:hidden"><div class="t" style="left:0;width:89px;text-align:center;top:3.86px;font-size:10.8px;color:#000000;letter-spacing:0.26px;">Bedarfsprüfung</div></div>
<div style="left:18px;top:479px;width:34px;height:19px;background:#ebebeb;border:1px solid #8f9db3;border-radius:2px;box-sizing:border-box"></div>
<div class="t" style="left:20.8px;top:483.86px;font-size:10.8px;color:#000000;transform-origin:0 0;">103</div>
<div style="left:52px;top:479px;width:80px;height:19px;background:#ebebeb;border:1px solid #8f9db3;border-radius:2px;box-sizing:border-box"></div>
<div class="t" style="left:54.8px;top:483.86px;font-size:10.8px;color:#000000;transform:scaleX(0.9);transform-origin:0 0;">VPK</div>
<div style="left:133px;top:480px;width:17px;height:16px;background:#c6c6c6;border:1px solid #9eabbf;border-radius:2.5px;box-sizing:border-box"></div>
<svg style="position:absolute;left:133px;top:480px" width="17" height="16" viewBox="0 0 17 16" shape-rendering="crispEdges">
<path d="M2.5 9.5V2.5H10" fill="none" stroke="#f6f6f6" stroke-width="1"/><rect x="10" y="2" width="1" height="1" fill="#5a5a5a"/><rect x="3" y="9" width="1" height="1" fill="#5a5a5a"/><rect x="5" y="5.5" width="7" height="7.5" fill="#ffffff"/><rect x="4" y="4" width="11" height="1.6" fill="#6e6e6e"/><rect x="4" y="5" width="1" height="9" fill="#7a7a7a"/><rect x="4" y="13" width="11" height="1" fill="#b8b8b8"/><rect x="12" y="5.5" width="1" height="8" fill="#9a9a9a"/><rect x="13" y="5.5" width="1" height="8" fill="#f2f2f2"/><rect x="14" y="5" width="1" height="8.5" fill="#9a9a9a"/><rect x="13" y="7" width="1" height="2" fill="#5a5a5a"/><path d="M6 7.9L8 9.4L6 10.9Z" fill="#8a8a8a" shape-rendering="auto"/><rect x="9" y="7" width="2" height="1" fill="#7e7e7e"/><rect x="9" y="9" width="2" height="1" fill="#7e7e7e"/><rect x="9" y="11" width="2" height="1" fill="#7e7e7e"/></svg>
<div style="left:150px;top:479px;width:34px;height:19px;background:#ebebeb;border:1px solid #8f9db3;border-radius:2px;box-sizing:border-box"></div>
<div class="t" style="left:152.8px;top:483.86px;font-size:10.8px;color:#000000;transform-origin:0 0;">10</div>
<div style="left:184px;top:479px;width:80px;height:19px;background:#ebebeb;border:1px solid #8f9db3;border-radius:2px;box-sizing:border-box"></div>
<div class="t" style="left:186.8px;top:483.86px;font-size:10.8px;color:#000000;letter-spacing:-0.1px;transform-origin:0 0;">Ungarn 1</div>
<div style="left:265px;top:480px;width:17px;height:16px;background:#c6c6c6;border:1px solid #9eabbf;border-radius:2.5px;box-sizing:border-box"></div>
<svg style="position:absolute;left:265px;top:480px" width="17" height="16" viewBox="0 0 17 16" shape-rendering="crispEdges">
<path d="M2.5 9.5V2.5H10" fill="none" stroke="#f6f6f6" stroke-width="1"/><rect x="10" y="2" width="1" height="1" fill="#5a5a5a"/><rect x="3" y="9" width="1" height="1" fill="#5a5a5a"/><rect x="5" y="5.5" width="7" height="7.5" fill="#ffffff"/><rect x="4" y="4" width="11" height="1.6" fill="#6e6e6e"/><rect x="4" y="5" width="1" height="9" fill="#7a7a7a"/><rect x="4" y="13" width="11" height="1" fill="#b8b8b8"/><rect x="12" y="5.5" width="1" height="8" fill="#9a9a9a"/><rect x="13" y="5.5" width="1" height="8" fill="#f2f2f2"/><rect x="14" y="5" width="1" height="8.5" fill="#9a9a9a"/><rect x="13" y="7" width="1" height="2" fill="#5a5a5a"/><path d="M6 7.9L8 9.4L6 10.9Z" fill="#8a8a8a" shape-rendering="auto"/><rect x="9" y="7" width="2" height="1" fill="#7e7e7e"/><rect x="9" y="9" width="2" height="1" fill="#7e7e7e"/><rect x="9" y="11" width="2" height="1" fill="#7e7e7e"/></svg>
<div style="left:282px;top:479px;width:27px;height:19px;background:#ffffff;border:1px solid #8f9db3;border-radius:2px;box-sizing:border-box"></div>
<div class="t" style="left:284.8px;top:483.86px;font-size:10.8px;color:#000000;transform-origin:0 0;">3</div>
<div style="left:309px;top:479px;width:120px;height:19px;background:#ffffff;border:1px solid #8f9db3;border-radius:2px;box-sizing:border-box"></div>
<div class="t" style="left:311.8px;top:483.86px;font-size:10.8px;color:#000000;transform-origin:0 0;">Materiallager</div>
<div style="left:430px;top:480px;width:17px;height:16px;background:#c6c6c6;border:1px solid #9eabbf;border-radius:2.5px;box-sizing:border-box"></div>
<svg style="position:absolute;left:430px;top:480px" width="17" height="16" viewBox="0 0 17 16" shape-rendering="crispEdges">
<path d="M2.5 9.5V2.5H10" fill="none" stroke="#1f6aa8" stroke-width="1"/><rect x="10" y="2" width="1" height="1" fill="#000"/><rect x="3" y="9" width="1" height="1" fill="#000"/><rect x="5" y="5.5" width="7" height="7.5" fill="#ffffff"/><rect x="4" y="4" width="11" height="1.6" fill="#000000"/><rect x="4" y="5" width="1" height="9" fill="#000"/><rect x="4" y="13" width="11" height="1" fill="#1f6aa8"/><rect x="12" y="5.5" width="1" height="8" fill="#1f6aa8"/><rect x="13" y="5.5" width="1" height="8" fill="#ffffff"/><rect x="14" y="5" width="1" height="8.5" fill="#1f6aa8"/><rect x="13" y="7" width="1" height="2" fill="#000"/><path d="M6 7.9L8 9.4L6 10.9Z" fill="#1a2cff" shape-rendering="auto"/><rect x="9" y="7" width="2" height="1" fill="#ff1a1a"/><rect x="9" y="9" width="2" height="1" fill="#ff1a1a"/><rect x="9" y="11" width="2" height="1" fill="#ff1a1a"/></svg>
<div style="left:448px;top:479px;width:26px;height:19px;background:#ffffff;border:1px solid #8f9db3;border-radius:2px;box-sizing:border-box"></div>
<div class="t" style="left:450.8px;top:483.86px;font-size:10.8px;color:#000000;transform-origin:0 0;">888</div>
<div style="left:474px;top:479px;width:120px;height:19px;background:#ffffff;border:1px solid #8f9db3;border-radius:2px;box-sizing:border-box"></div>
<div class="t" style="left:476.8px;top:483.86px;font-size:10.8px;color:#000000;letter-spacing:-0.2px;transform-origin:0 0;">Sammellager</div>
<div style="left:595px;top:480px;width:17px;height:16px;background:#c6c6c6;border:1px solid #9eabbf;border-radius:2.5px;box-sizing:border-box"></div>
<svg style="position:absolute;left:595px;top:480px" width="17" height="16" viewBox="0 0 17 16" shape-rendering="crispEdges">
<path d="M2.5 9.5V2.5H10" fill="none" stroke="#1f6aa8" stroke-width="1"/><rect x="10" y="2" width="1" height="1" fill="#000"/><rect x="3" y="9" width="1" height="1" fill="#000"/><rect x="5" y="5.5" width="7" height="7.5" fill="#ffffff"/><rect x="4" y="4" width="11" height="1.6" fill="#000000"/><rect x="4" y="5" width="1" height="9" fill="#000"/><rect x="4" y="13" width="11" height="1" fill="#1f6aa8"/><rect x="12" y="5.5" width="1" height="8" fill="#1f6aa8"/><rect x="13" y="5.5" width="1" height="8" fill="#ffffff"/><rect x="14" y="5" width="1" height="8.5" fill="#1f6aa8"/><rect x="13" y="7" width="1" height="2" fill="#000"/><path d="M6 7.9L8 9.4L6 10.9Z" fill="#1a2cff" shape-rendering="auto"/><rect x="9" y="7" width="2" height="1" fill="#ff1a1a"/><rect x="9" y="9" width="2" height="1" fill="#ff1a1a"/><rect x="9" y="11" width="2" height="1" fill="#ff1a1a"/></svg>
<div style="left:613px;top:479px;width:27px;height:19px;background:#ebebeb;border:1px solid #8f9db3;border-radius:2px;box-sizing:border-box"></div>
<div style="left:640px;top:479px;width:80px;height:19px;background:#ebebeb;border:1px solid #8f9db3;border-radius:2px;box-sizing:border-box"></div>
<div style="left:721px;top:480px;width:17px;height:16px;background:#c6c6c6;border:1px solid #9eabbf;border-radius:2.5px;box-sizing:border-box"></div>
<svg style="position:absolute;left:721px;top:480px" width="17" height="16" viewBox="0 0 17 16" shape-rendering="crispEdges">
<path d="M2.5 9.5V2.5H10" fill="none" stroke="#f6f6f6" stroke-width="1"/><rect x="10" y="2" width="1" height="1" fill="#5a5a5a"/><rect x="3" y="9" width="1" height="1" fill="#5a5a5a"/><rect x="5" y="5.5" width="7" height="7.5" fill="#ffffff"/><rect x="4" y="4" width="11" height="1.6" fill="#6e6e6e"/><rect x="4" y="5" width="1" height="9" fill="#7a7a7a"/><rect x="4" y="13" width="11" height="1" fill="#b8b8b8"/><rect x="12" y="5.5" width="1" height="8" fill="#9a9a9a"/><rect x="13" y="5.5" width="1" height="8" fill="#f2f2f2"/><rect x="14" y="5" width="1" height="8.5" fill="#9a9a9a"/><rect x="13" y="7" width="1" height="2" fill="#5a5a5a"/><path d="M6 7.9L8 9.4L6 10.9Z" fill="#8a8a8a" shape-rendering="auto"/><rect x="9" y="7" width="2" height="1" fill="#7e7e7e"/><rect x="9" y="9" width="2" height="1" fill="#7e7e7e"/><rect x="9" y="11" width="2" height="1" fill="#7e7e7e"/></svg>
<div style="left:738px;top:479px;width:27px;height:19px;background:#ffffff;border:1px solid #8f9db3;border-radius:2px;box-sizing:border-box"></div>
<div class="t" style="right:232px;top:483.86px;font-size:10.8px;color:#000000;transform-origin:100% 0;">0</div>
<div style="left:792px;top:482px;width:12px;height:12px;background:#ffffff;border:1px solid #5b6f8e;box-sizing:border-box"></div>
<div style="left:826px;top:480px;width:89px;height:16px;background:#c0c0c0;border:1px solid #93a1b6;border-radius:2.5px;box-sizing:border-box;box-shadow:inset 1px 1px 0 #d2d2d2"></div>
<div style="left:826px;top:480px;width:89px;height:14px;overflow:hidden"><div class="t" style="left:0;width:89px;text-align:center;top:3.86px;font-size:10.8px;color:#000000;letter-spacing:0.26px;">Bedarfsprüfung</div></div>
<div style="left:18px;top:498px;width:34px;height:18px;background:#ebebeb;border:1px solid #8f9db3;border-radius:2px;box-sizing:border-box"></div>
<div style="left:52px;top:498px;width:80px;height:18px;background:#ebebeb;border:1px solid #8f9db3;border-radius:2px;box-sizing:border-box"></div>
<div style="left:133px;top:499px;width:17px;height:16px;background:#c6c6c6;border:1px solid #9eabbf;border-radius:2.5px;box-sizing:border-box"></div>
<svg style="position:absolute;left:133px;top:499px" width="17" height="16" viewBox="0 0 17 16" shape-rendering="crispEdges">
<path d="M2.5 9.5V2.5H10" fill="none" stroke="#f6f6f6" stroke-width="1"/><rect x="10" y="2" width="1" height="1" fill="#5a5a5a"/><rect x="3" y="9" width="1" height="1" fill="#5a5a5a"/><rect x="5" y="5.5" width="7" height="7.5" fill="#ffffff"/><rect x="4" y="4" width="11" height="1.6" fill="#6e6e6e"/><rect x="4" y="5" width="1" height="9" fill="#7a7a7a"/><rect x="4" y="13" width="11" height="1" fill="#b8b8b8"/><rect x="12" y="5.5" width="1" height="8" fill="#9a9a9a"/><rect x="13" y="5.5" width="1" height="8" fill="#f2f2f2"/><rect x="14" y="5" width="1" height="8.5" fill="#9a9a9a"/><rect x="13" y="7" width="1" height="2" fill="#5a5a5a"/><path d="M6 7.9L8 9.4L6 10.9Z" fill="#8a8a8a" shape-rendering="auto"/><rect x="9" y="7" width="2" height="1" fill="#7e7e7e"/><rect x="9" y="9" width="2" height="1" fill="#7e7e7e"/><rect x="9" y="11" width="2" height="1" fill="#7e7e7e"/></svg>
<div style="left:150px;top:498px;width:34px;height:18px;background:#ebebeb;border:1px solid #8f9db3;border-radius:2px;box-sizing:border-box"></div>
<div style="left:184px;top:498px;width:80px;height:18px;background:#ebebeb;border:1px solid #8f9db3;border-radius:2px;box-sizing:border-box"></div>
<div style="left:265px;top:499px;width:17px;height:16px;background:#c6c6c6;border:1px solid #9eabbf;border-radius:2.5px;box-sizing:border-box"></div>
<svg style="position:absolute;left:265px;top:499px" width="17" height="16" viewBox="0 0 17 16" shape-rendering="crispEdges">
<path d="M2.5 9.5V2.5H10" fill="none" stroke="#f6f6f6" stroke-width="1"/><rect x="10" y="2" width="1" height="1" fill="#5a5a5a"/><rect x="3" y="9" width="1" height="1" fill="#5a5a5a"/><rect x="5" y="5.5" width="7" height="7.5" fill="#ffffff"/><rect x="4" y="4" width="11" height="1.6" fill="#6e6e6e"/><rect x="4" y="5" width="1" height="9" fill="#7a7a7a"/><rect x="4" y="13" width="11" height="1" fill="#b8b8b8"/><rect x="12" y="5.5" width="1" height="8" fill="#9a9a9a"/><rect x="13" y="5.5" width="1" height="8" fill="#f2f2f2"/><rect x="14" y="5" width="1" height="8.5" fill="#9a9a9a"/><rect x="13" y="7" width="1" height="2" fill="#5a5a5a"/><path d="M6 7.9L8 9.4L6 10.9Z" fill="#8a8a8a" shape-rendering="auto"/><rect x="9" y="7" width="2" height="1" fill="#7e7e7e"/><rect x="9" y="9" width="2" height="1" fill="#7e7e7e"/><rect x="9" y="11" width="2" height="1" fill="#7e7e7e"/></svg>
<div style="left:282px;top:498px;width:27px;height:18px;background:#ffffff;border:1px solid #8f9db3;border-radius:2px;box-sizing:border-box"></div>
<div style="left:309px;top:498px;width:120px;height:18px;background:#ffffff;border:1px solid #8f9db3;border-radius:2px;box-sizing:border-box"></div>
<div style="left:430px;top:499px;width:17px;height:16px;background:#c6c6c6;border:1px solid #9eabbf;border-radius:2.5px;box-sizing:border-box"></div>
<svg style="position:absolute;left:430px;top:499px" width="17" height="16" viewBox="0 0 17 16" shape-rendering="crispEdges">
<path d="M2.5 9.5V2.5H10" fill="none" stroke="#f6f6f6" stroke-width="1"/><rect x="10" y="2" width="1" height="1" fill="#5a5a5a"/><rect x="3" y="9" width="1" height="1" fill="#5a5a5a"/><rect x="5" y="5.5" width="7" height="7.5" fill="#ffffff"/><rect x="4" y="4" width="11" height="1.6" fill="#6e6e6e"/><rect x="4" y="5" width="1" height="9" fill="#7a7a7a"/><rect x="4" y="13" width="11" height="1" fill="#b8b8b8"/><rect x="12" y="5.5" width="1" height="8" fill="#9a9a9a"/><rect x="13" y="5.5" width="1" height="8" fill="#f2f2f2"/><rect x="14" y="5" width="1" height="8.5" fill="#9a9a9a"/><rect x="13" y="7" width="1" height="2" fill="#5a5a5a"/><path d="M6 7.9L8 9.4L6 10.9Z" fill="#8a8a8a" shape-rendering="auto"/><rect x="9" y="7" width="2" height="1" fill="#7e7e7e"/><rect x="9" y="9" width="2" height="1" fill="#7e7e7e"/><rect x="9" y="11" width="2" height="1" fill="#7e7e7e"/></svg>
<div style="left:448px;top:498px;width:26px;height:18px;background:#ffffff;border:1px solid #8f9db3;border-radius:2px;box-sizing:border-box"></div>
<div style="left:474px;top:498px;width:120px;height:18px;background:#ffffff;border:1px solid #8f9db3;border-radius:2px;box-sizing:border-box"></div>
<div style="left:595px;top:499px;width:17px;height:16px;background:#c6c6c6;border:1px solid #9eabbf;border-radius:2.5px;box-sizing:border-box"></div>
<svg style="position:absolute;left:595px;top:499px" width="17" height="16" viewBox="0 0 17 16" shape-rendering="crispEdges">
<path d="M2.5 9.5V2.5H10" fill="none" stroke="#f6f6f6" stroke-width="1"/><rect x="10" y="2" width="1" height="1" fill="#5a5a5a"/><rect x="3" y="9" width="1" height="1" fill="#5a5a5a"/><rect x="5" y="5.5" width="7" height="7.5" fill="#ffffff"/><rect x="4" y="4" width="11" height="1.6" fill="#6e6e6e"/><rect x="4" y="5" width="1" height="9" fill="#7a7a7a"/><rect x="4" y="13" width="11" height="1" fill="#b8b8b8"/><rect x="12" y="5.5" width="1" height="8" fill="#9a9a9a"/><rect x="13" y="5.5" width="1" height="8" fill="#f2f2f2"/><rect x="14" y="5" width="1" height="8.5" fill="#9a9a9a"/><rect x="13" y="7" width="1" height="2" fill="#5a5a5a"/><path d="M6 7.9L8 9.4L6 10.9Z" fill="#8a8a8a" shape-rendering="auto"/><rect x="9" y="7" width="2" height="1" fill="#7e7e7e"/><rect x="9" y="9" width="2" height="1" fill="#7e7e7e"/><rect x="9" y="11" width="2" height="1" fill="#7e7e7e"/></svg>
<div style="left:613px;top:498px;width:27px;height:18px;background:#ebebeb;border:1px solid #8f9db3;border-radius:2px;box-sizing:border-box"></div>
<div style="left:640px;top:498px;width:80px;height:18px;background:#ebebeb;border:1px solid #8f9db3;border-radius:2px;box-sizing:border-box"></div>
<div style="left:721px;top:499px;width:17px;height:16px;background:#c6c6c6;border:1px solid #9eabbf;border-radius:2.5px;box-sizing:border-box"></div>
<svg style="position:absolute;left:721px;top:499px" width="17" height="16" viewBox="0 0 17 16" shape-rendering="crispEdges">
<path d="M2.5 9.5V2.5H10" fill="none" stroke="#f6f6f6" stroke-width="1"/><rect x="10" y="2" width="1" height="1" fill="#5a5a5a"/><rect x="3" y="9" width="1" height="1" fill="#5a5a5a"/><rect x="5" y="5.5" width="7" height="7.5" fill="#ffffff"/><rect x="4" y="4" width="11" height="1.6" fill="#6e6e6e"/><rect x="4" y="5" width="1" height="9" fill="#7a7a7a"/><rect x="4" y="13" width="11" height="1" fill="#b8b8b8"/><rect x="12" y="5.5" width="1" height="8" fill="#9a9a9a"/><rect x="13" y="5.5" width="1" height="8" fill="#f2f2f2"/><rect x="14" y="5" width="1" height="8.5" fill="#9a9a9a"/><rect x="13" y="7" width="1" height="2" fill="#5a5a5a"/><path d="M6 7.9L8 9.4L6 10.9Z" fill="#8a8a8a" shape-rendering="auto"/><rect x="9" y="7" width="2" height="1" fill="#7e7e7e"/><rect x="9" y="9" width="2" height="1" fill="#7e7e7e"/><rect x="9" y="11" width="2" height="1" fill="#7e7e7e"/></svg>
<div style="left:738px;top:498px;width:27px;height:18px;background:#ffffff;border:1px solid #8f9db3;border-radius:2px;box-sizing:border-box"></div>
<div style="left:792px;top:501px;width:12px;height:12px;background:#c4c4c4;border:1px solid #c4c4c4;box-sizing:border-box"></div>
<div style="left:826px;top:499px;width:89px;height:16px;background:#c0c0c0;border:1px solid #93a1b6;border-radius:2.5px;box-sizing:border-box;box-shadow:inset 1px 1px 0 #d2d2d2"></div>
<div style="left:826px;top:499px;width:89px;height:14px;overflow:hidden"><div class="t" style="left:0;width:89px;text-align:center;top:3.86px;font-size:10.8px;color:#8796b2;letter-spacing:0.26px;text-shadow:0.8px 0.8px 0 #f2f4f8">Bedarfsprüfung</div></div>
<div style="left:921px;top:330px;width:15px;height:186px;background:#cfcfcf;border:1px solid #9aa8bc;border-radius:7px;box-sizing:border-box"></div>
<div style="left:922px;top:344px;width:13px;height:1px;background:#9aa8bc"></div>
<div style="left:922px;top:501px;width:13px;height:1px;background:#9aa8bc"></div>
<svg style="position:absolute;left:921px;top:330px" width="15" height="14" viewBox="0 0 15 14"><path d="M3.5 9.5H11.5L7.5 5.5Z" fill="#5f7391"/></svg>
<svg style="position:absolute;left:921px;top:502px" width="15" height="14" viewBox="0 0 15 14"><path d="M3.5 4.5H11.5L7.5 8.5Z" fill="#5f7391"/></svg>
<div style="left:12px;top:523px;width:702px;height:37px;border:1px solid #000;border-radius:10px;box-sizing:border-box"></div>
<div class="t" style="left:27.3px;top:534.86px;font-size:10.8px;color:#000000;letter-spacing:0.33px;transform-origin:0 0;">Erfassung</div>
<div style="left:85px;top:532px;width:120px;height:19px;background:#ebebeb;border:1px solid #8f9db3;border-radius:2px;box-sizing:border-box"></div>
<div class="t" style="left:87.8px;top:536.86px;font-size:10.8px;color:#000000;transform-origin:0 0;">14.02.2020 14:21</div>
<div style="left:205px;top:532px;width:133px;height:19px;background:#ebebeb;border:1px solid #8f9db3;border-radius:2px;box-sizing:border-box"></div>
<div class="t" style="left:207.8px;top:536.86px;font-size:10.8px;color:#000000;letter-spacing:0.26px;transform:scaleX(0.9);transform-origin:0 0;">REFLEX</div>
<div class="t" style="left:381.3px;top:534.86px;font-size:10.8px;color:#000000;letter-spacing:0.22px;transform-origin:0 0;">Änderung</div>
<div style="left:437px;top:532px;width:120px;height:19px;background:#ebebeb;border:1px solid #8f9db3;border-radius:2px;box-sizing:border-box"></div>
<div style="left:557px;top:532px;width:133px;height:19px;background:#ebebeb;border:1px solid #8f9db3;border-radius:2px;box-sizing:border-box"></div>
<div style="left:330px;top:150px;width:338px;height:290px;background:#fff"></div>
<div style="left:330px;top:150px;width:338px;height:2px;background:#1f2d40"></div>
<div style="left:330px;top:152px;width:2px;height:287px;background:#5d708c"></div>
<div style="left:330px;top:150px;width:2px;height:20px;background:#1f2d40"></div>
<div style="left:665px;top:170px;width:2px;height:269px;background:#5d708c"></div>
<div style="left:666px;top:150px;width:2px;height:20px;background:#1f2a38"></div>
<div style="left:667px;top:170px;width:1px;height:270px;background:#000"></div>
<div style="left:332px;top:437px;width:335px;height:2px;background:#5d708c"></div>
<div style="left:331px;top:439px;width:337px;height:1px;background:#000"></div>
<div style="left:332px;top:152px;width:334px;height:18px;background:#97a5b9"></div>
<svg style="position:absolute;left:334px;top:152px" width="14" height="17" viewBox="0 0 14 17"><path d="M0.5 0.5H6.5V6.5H12.5V15.5H0.5Z" fill="#3d9be0" stroke="#1e72b8" stroke-width="1"/><path d="M8.5 0.8L12.5 5.5H8.5Z" fill="#3d9be0" stroke="#1e72b8" stroke-width="1"/><path d="M5.5 8.1A2.3 2.3 0 0 0 5.5 12.7" stroke="#fff" stroke-width="1.7" fill="none"/><path d="M2 10.4H3.4M2.9 7.8L3.9 8.8M2.9 13L3.9 12M5.4 6.6V7.9M5.4 12.9V14.2" stroke="#fff" stroke-width="1.3"/><circle cx="5.6" cy="10.4" r="0.75" fill="#fff"/><path d="M7 8L11 10.5L7 13Z" fill="#fff"/></svg>
<div style="left:348px;top:152px;width:269px;height:18px;overflow:hidden">
<div class="t" style="left:1.3px;top:2.59px;font-size:12.3px;color:#d9dde3;transform-origin:0 0;-webkit-text-stroke:0;">Einstellungen für die Materialverfügbarkeitsprüfung</div>
</div>
<svg style="position:absolute;left:620px;top:155px" width="46" height="12" viewBox="0 0 46 12"><path d="M0 8.8H7.8" stroke="#5d5954" stroke-width="2"/><path d="M9.6 0.4L4.9 5.1" stroke="#5d5954" stroke-width="1.7"/><path d="M4.6 2V5.4H7.9" fill="none" stroke="#5d5954" stroke-width="1.3"/><path d="M16 1H25.3V9.8" fill="none" stroke="#5d5954" stroke-width="1.6"/><path d="M16.4 9.6L21.2 4.8" stroke="#5d5954" stroke-width="1.7"/><path d="M18.2 4.8H21.3V7.9" fill="none" stroke="#5d5954" stroke-width="1.3"/><path d="M32.3 0.6L42 10.2M42 0.6L32.3 10.2" stroke="#5d5954" stroke-width="2"/></svg>
<div class="t" style="right:598px;top:199.86px;font-size:10.8px;color:#000000;transform-origin:100% 0;">Prod.Schl.</div>
<div class="t" style="right:598px;top:218.86px;font-size:10.8px;color:#000000;letter-spacing:0.12px;transform-origin:100% 0;">Abteilung</div>
<div style="left:403px;top:197px;width:32px;height:17px;background:#ebebeb;border-style:solid;border-width:2px 1px 1px 2px;border-color:#6a7d9b #c9c9c9 #c9c9c9 #6a7d9b;border-radius:3px;box-sizing:border-box"></div>
<div class="t" style="left:405.3px;top:201.86px;font-size:10.8px;color:#000000;transform-origin:0 0;">1</div>
<div style="left:436px;top:197px;width:212px;height:17px;background:#ebebeb;border-style:solid;border-width:2px 1px 1px 2px;border-color:#6a7d9b #c9c9c9 #c9c9c9 #6a7d9b;border-radius:3px;box-sizing:border-box"></div>
<div class="t" style="left:438.3px;top:201.86px;font-size:10.8px;color:#000000;letter-spacing:-0.15px;transform-origin:0 0;">Möbel Eigenproduktion</div>
<div style="left:403px;top:215px;width:32px;height:18px;background:#ebebeb;border-style:solid;border-width:2px 1px 1px 2px;border-color:#6a7d9b #c9c9c9 #c9c9c9 #6a7d9b;border-radius:3px;box-sizing:border-box"></div>
<div class="t" style="left:405.3px;top:219.86px;font-size:10.8px;color:#000000;transform-origin:0 0;">10</div>
<div style="left:436px;top:215px;width:79px;height:18px;background:#ebebeb;border-style:solid;border-width:2px 1px 1px 2px;border-color:#6a7d9b #c9c9c9 #c9c9c9 #6a7d9b;border-radius:3px;box-sizing:border-box"></div>
<div class="t" style="left:438.3px;top:219.86px;font-size:10.8px;color:#000000;transform:scaleX(0.9);transform-origin:0 0;">GESTB</div>
<div style="left:336px;top:243px;width:325px;height:1px;background:#111"></div>
<div class="t" style="right:526px;top:279.86px;font-size:10.8px;color:#000000;transform-origin:100% 0;">Deckung Lagergruppe</div>
<div class="t" style="right:526px;top:297.86px;font-size:10.8px;color:#000000;letter-spacing:0.13px;transform-origin:100% 0;">Bedarf Lagergruppe</div>
<div style="left:475px;top:277px;width:25px;height:17px;background:#ffffff;border-style:solid;border-width:2px 1px 1px 2px;border-color:#6a7d9b #c9c9c9 #c9c9c9 #6a7d9b;border-radius:3px;box-sizing:border-box"></div>
<div class="t" style="left:477.3px;top:281.86px;font-size:10.8px;color:#000000;transform-origin:0 0;">9</div>
<div style="left:501px;top:277px;width:133px;height:17px;background:#ffffff;border-style:solid;border-width:2px 1px 1px 2px;border-color:#6a7d9b #c9c9c9 #c9c9c9 #6a7d9b;border-radius:3px;box-sizing:border-box"></div>
<div class="t" style="left:503.3px;top:281.86px;font-size:10.8px;color:#000000;letter-spacing:-0.1px;transform-origin:0 0;">Lindemann</div>
<div style="left:637px;top:279px;width:15px;height:14px;background:#c8c8c8;border-style:solid;border-width:1px 2px 2px 1px;border-color:#e4e4e4 #7d8ca3 #7d8ca3 #e4e4e4;box-sizing:border-box"></div>
<svg style="position:absolute;left:635px;top:278px" width="17" height="16" viewBox="0 0 17 16" shape-rendering="crispEdges">
<path d="M2.5 9.5V2.5H10" fill="none" stroke="#1f6aa8" stroke-width="1"/><rect x="10" y="2" width="1" height="1" fill="#000"/><rect x="3" y="9" width="1" height="1" fill="#000"/><rect x="5" y="5.5" width="7" height="7.5" fill="#ffffff"/><rect x="4" y="4" width="11" height="1.6" fill="#000000"/><rect x="4" y="5" width="1" height="9" fill="#000"/><rect x="4" y="13" width="11" height="1" fill="#1f6aa8"/><rect x="12" y="5.5" width="1" height="8" fill="#1f6aa8"/><rect x="13" y="5.5" width="1" height="8" fill="#ffffff"/><rect x="14" y="5" width="1" height="8.5" fill="#1f6aa8"/><rect x="13" y="7" width="1" height="2" fill="#000"/><path d="M6 7.9L8 9.4L6 10.9Z" fill="#1a2cff" shape-rendering="auto"/><rect x="9" y="7" width="2" height="1" fill="#ff1a1a"/><rect x="9" y="9" width="2" height="1" fill="#ff1a1a"/><rect x="9" y="11" width="2" height="1" fill="#ff1a1a"/></svg>
<div style="left:475px;top:295px;width:25px;height:18px;background:#ffffff;border-style:solid;border-width:2px 1px 1px 2px;border-color:#6a7d9b #c9c9c9 #c9c9c9 #6a7d9b;border-radius:3px;box-sizing:border-box"></div>
<div class="t" style="left:477.3px;top:299.86px;font-size:10.8px;color:#000000;transform-origin:0 0;">9</div>
<div style="left:501px;top:295px;width:133px;height:18px;background:#ffffff;border-style:solid;border-width:2px 1px 1px 2px;border-color:#6a7d9b #c9c9c9 #c9c9c9 #6a7d9b;border-radius:3px;box-sizing:border-box"></div>
<div class="t" style="left:503.3px;top:299.86px;font-size:10.8px;color:#000000;letter-spacing:-0.1px;transform-origin:0 0;">Lindemann</div>
<div style="left:637px;top:297px;width:15px;height:14px;background:#c8c8c8;border-style:solid;border-width:1px 2px 2px 1px;border-color:#e4e4e4 #7d8ca3 #7d8ca3 #e4e4e4;box-sizing:border-box"></div>
<svg style="position:absolute;left:635px;top:296px" width="17" height="16" viewBox="0 0 17 16" shape-rendering="crispEdges">
<path d="M2.5 9.5V2.5H10" fill="none" stroke="#1f6aa8" stroke-width="1"/><rect x="10" y="2" width="1" height="1" fill="#000"/><rect x="3" y="9" width="1" height="1" fill="#000"/><rect x="5" y="5.5" width="7" height="7.5" fill="#ffffff"/><rect x="4" y="4" width="11" height="1.6" fill="#000000"/><rect x="4" y="5" width="1" height="9" fill="#000"/><rect x="4" y="13" width="11" height="1" fill="#1f6aa8"/><rect x="12" y="5.5" width="1" height="8" fill="#1f6aa8"/><rect x="13" y="5.5" width="1" height="8" fill="#ffffff"/><rect x="14" y="5" width="1" height="8.5" fill="#1f6aa8"/><rect x="13" y="7" width="1" height="2" fill="#000"/><path d="M6 7.9L8 9.4L6 10.9Z" fill="#1a2cff" shape-rendering="auto"/><rect x="9" y="7" width="2" height="1" fill="#ff1a1a"/><rect x="9" y="9" width="2" height="1" fill="#ff1a1a"/><rect x="9" y="11" width="2" height="1" fill="#ff1a1a"/></svg>
<div style="left:581px;top:413px;width:77px;height:19px;background:#c0c0c0;border:1px solid #93a1b6;border-radius:2.5px;box-sizing:border-box;box-shadow:inset 1px 1px 0 #d2d2d2"></div>
<div class="t" style="left:580.5px;width:77px;text-align:center;top:416.86px;font-size:10.8px;color:#000000;letter-spacing:0.1px;">Schliessen</div>
</body></html>
